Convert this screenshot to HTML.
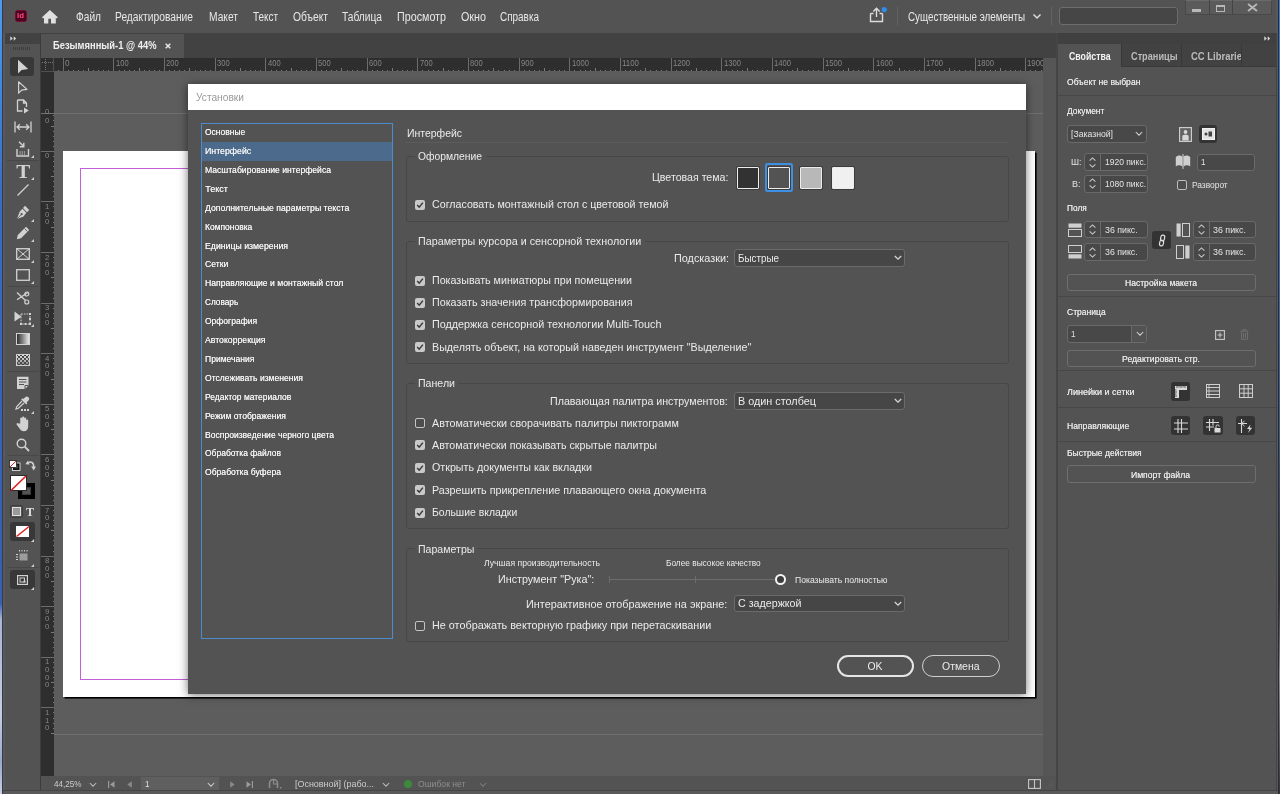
<!DOCTYPE html>
<html><head><meta charset="utf-8"><title>InDesign</title>
<style>
*{box-sizing:border-box;margin:0;padding:0}
html,body{width:1280px;height:794px;overflow:hidden;background:#535353;font-family:"Liberation Sans",sans-serif;color:#e6e6e6;font-size:12px}
.a{position:absolute}
.t{position:absolute;white-space:nowrap}
svg{position:absolute;overflow:visible}
#all{position:absolute;left:0;top:0;width:1280px;height:794px;will-change:transform}

</style></head><body>
<div id="all">
<div class="a" style="left:0px;top:0px;width:2.4px;height:794px;background:linear-gradient(#4d9cf0 0,#3f86dc 12%,#3a6cc4 25%,#3663b8 50%,#3a5fae 76%,#a9b5d2 78%,#c4cde0 90%,#9aa8cc 96%,#c8d0e2 100%);"></div>
<div class="a" style="left:2.4px;top:0px;width:0.9px;height:794px;background:#343c4c;"></div>
<div class="a" style="left:3.2px;top:0px;width:2.1px;height:794px;background:#595959;"></div>
<div class="a" style="left:1276.2px;top:0px;width:1.9px;height:794px;background:#595959;"></div>
<div class="a" style="left:1278px;top:0px;width:0.7px;height:794px;background:#2c2c2c;"></div>
<div class="a" style="left:1278.6px;top:0px;width:1.4px;height:794px;background:linear-gradient(#3b7fd8 0,#3a6fc0 30%,#39598f 55%,#2a2f3a 75%,#8a8f98 85%,#30343c 100%);"></div>
<div class="a" style="left:3.2px;top:0px;width:1273px;height:33px;background:#535353;"></div>
<div class="a" style="left:3.2px;top:791px;width:1275px;height:3px;background:#595959;"></div>
<div class="a" style="left:3.2px;top:790.2px;width:1275px;height:0.9px;background:#454545;"></div>
<div class="a" style="left:1275.5px;top:33px;width:0.8px;height:758px;background:#444;"></div>
<div class="a" style="left:5px;top:33px;width:0.6px;height:758px;background:#454545;"></div>
<div class="a" style="left:5px;top:33px;width:36px;height:11px;background:#424242;"></div>
<div class="a" style="left:5px;top:44px;width:36px;height:746px;background:#535353;"></div>
<div class="a" style="left:40px;top:33px;width:1px;height:757px;background:#3c3c3c;"></div>
<div class="a" style="left:41px;top:33px;width:1016px;height:25px;background:#424242;"></div>
<div class="a" style="left:41px;top:34px;width:143px;height:24px;background:#535353;"></div>
<div class="a" style="left:41px;top:58px;width:1002px;height:13px;background:#2e2e2e;"></div>
<div class="a" style="left:41px;top:71px;width:13px;height:705px;background:#2e2e2e;"></div>
<div class="a" style="left:54px;top:71px;width:989px;height:705px;background:#5d5d5d;"></div>
<div class="a" style="left:41px;top:113px;width:1002px;height:1px;background:#707070;"></div>
<div class="a" style="left:41px;top:71px;width:13px;height:1px;background:#4e4e4e;"></div>
<div class="a" style="left:54px;top:734px;width:989px;height:1px;background:#707070;"></div>
<div class="a" style="left:1043px;top:58px;width:14px;height:718px;background:#565656;"></div>
<div class="a" style="left:41px;top:776px;width:1016px;height:14px;background:#535353;"></div>
<div class="a" style="left:62.8px;top:150.8px;width:972.6px;height:546.5px;background:#fff;box-shadow:1.6px 1.6px 0 #000;"></div>
<div class="a" style="left:80px;top:168px;width:940px;height:512px;border:1px solid #c35fd4;"></div>
<div class="a" style="left:188px;top:84px;width:838px;height:610px;box-shadow:0 1px 9px rgba(0,0,0,.55);"></div>
<div class="a" style="left:188px;top:84px;width:838px;height:26px;background:#fff;"></div>
<div class="a" style="left:188px;top:110px;width:838px;height:584px;background:#535353;"></div>
<div class="a" style="left:1057px;top:33px;width:219px;height:757px;background:#535353;"></div>
<div class="a" style="left:1058px;top:33px;width:218px;height:11px;background:#404040;"></div>
<div class="a" style="left:1058px;top:44px;width:218px;height:22.6px;background:#424242;"></div>
<div class="a" style="left:1056px;top:33px;width:2px;height:757px;background:#454545;"></div>
<div class="a" style="left:14.5px;top:10px;width:12px;height:12px;background:#4b0320;border:1px solid #7a0a35;border-radius:2.5px;"></div>
<svg style="left:42px;top:9.6px" width="15.8" height="13.6" viewBox="0 0 15.8 13.6"><path d="M7.9 0 L0 7.3 L1.1 8.5 L2 7.7 V13.6 H6.3 V8.7 H9 V13.6 H13.8 V7.7 L14.7 8.5 L15.8 7.3 Z" fill="#e0e0e0"/></svg>
<svg style="left:868px;top:6px" width="20" height="18" viewBox="0 0 20 18"><path d="M2.5 7.5 V15.5 H14.5 V7.5 M5.5 7.5 H2.5 M11.5 7.5 H14.5" fill="none" stroke="#dcdcdc" stroke-width="1.4"/><path d="M8.5 11 V2.5 M5.3 5.5 L8.5 2.2 L11.7 5.5" fill="none" stroke="#dcdcdc" stroke-width="1.4"/><circle cx="16.2" cy="3.6" r="2.6" fill="#2f8cf0"/></svg>
<div class="a" style="left:897px;top:7px;width:1px;height:18px;background:#626262;"></div>
<svg style="left:1032px;top:13px" width="10" height="7" viewBox="0 0 10 7"><path d="M1.5 1.5 L5 5 L8.5 1.5" fill="none" stroke="#dcdcdc" stroke-width="1.5"/></svg>
<div class="a" style="left:1051px;top:7px;width:1px;height:18px;background:#626262;"></div>
<div class="a" style="left:1059px;top:7px;width:119px;height:18px;background:#464646;border:1px solid #6c6c6c;border-radius:3px;"></div>
<div class="a" style="left:1185px;top:0px;width:87px;height:15px;background:#5b5b5b;border:1px solid #484848;border-top:1px solid #6a6a6a;"></div>
<div class="a" style="left:1209px;top:0px;width:1px;height:15px;background:#454545;"></div>
<div class="a" style="left:1232px;top:0px;width:1px;height:15px;background:#454545;"></div>
<div class="a" style="left:1192px;top:9px;width:9px;height:3px;background:#b8b8b8;"></div>
<div class="a" style="left:1216px;top:5px;width:9px;height:7px;border:2px solid #b8b8b8;border-width:2px 1.5px 1.5px 1.5px;"></div>
<svg style="left:1247px;top:3px" width="11" height="9" viewBox="0 0 11 9"><path d="M1 1 L10 8 M10 1 L1 8" stroke="#b8b8b8" stroke-width="1.8"/></svg>
<svg style="left:164.5px;top:43px" width="6" height="6" viewBox="0 0 6 6"><path d="M0.7 0.7 L5.3 5.3 M5.3 0.7 L0.7 5.3" stroke="#e8e8e8" stroke-width="1.5"/></svg>
<svg style="left:10px;top:35.5px" width="7" height="5" viewBox="0 0 7 5"><path d="M0.3 0.3 L2.8 2.5 L0.3 4.7 Z M3.7 0.3 L6.2 2.5 L3.7 4.7 Z" fill="#d8d8d8"/></svg>
<div class="a" style="left:13px;top:47px;width:18px;height:3px;background:repeating-linear-gradient(90deg,#3d3d3d 0,#3d3d3d 1px,transparent 1px,transparent 2px);"></div>
<svg style="left:41px;top:58px" width="1002" height="13" viewBox="0 0 1002 13" shape-rendering="crispEdges"><rect x="16.73" y="11.5" width="1" height="1.5" fill="#7a7a7a"/><rect x="21.80" y="0" width="1" height="13" fill="#6c6c6c"/><rect x="26.87" y="11.5" width="1" height="1.5" fill="#7a7a7a"/><rect x="31.93" y="11.5" width="1" height="1.5" fill="#7a7a7a"/><rect x="37.00" y="11.5" width="1" height="1.5" fill="#7a7a7a"/><rect x="42.06" y="11.5" width="1" height="1.5" fill="#7a7a7a"/><rect x="47.13" y="10" width="1" height="3" fill="#7a7a7a"/><rect x="52.20" y="11.5" width="1" height="1.5" fill="#7a7a7a"/><rect x="57.26" y="11.5" width="1" height="1.5" fill="#7a7a7a"/><rect x="62.33" y="11.5" width="1" height="1.5" fill="#7a7a7a"/><rect x="67.39" y="11.5" width="1" height="1.5" fill="#7a7a7a"/><rect x="72.46" y="0" width="1" height="13" fill="#6c6c6c"/><rect x="77.53" y="11.5" width="1" height="1.5" fill="#7a7a7a"/><rect x="82.59" y="11.5" width="1" height="1.5" fill="#7a7a7a"/><rect x="87.66" y="11.5" width="1" height="1.5" fill="#7a7a7a"/><rect x="92.72" y="11.5" width="1" height="1.5" fill="#7a7a7a"/><rect x="97.79" y="10" width="1" height="3" fill="#7a7a7a"/><rect x="102.86" y="11.5" width="1" height="1.5" fill="#7a7a7a"/><rect x="107.92" y="11.5" width="1" height="1.5" fill="#7a7a7a"/><rect x="112.99" y="11.5" width="1" height="1.5" fill="#7a7a7a"/><rect x="118.05" y="11.5" width="1" height="1.5" fill="#7a7a7a"/><rect x="123.12" y="0" width="1" height="13" fill="#6c6c6c"/><rect x="128.19" y="11.5" width="1" height="1.5" fill="#7a7a7a"/><rect x="133.25" y="11.5" width="1" height="1.5" fill="#7a7a7a"/><rect x="138.32" y="11.5" width="1" height="1.5" fill="#7a7a7a"/><rect x="143.38" y="11.5" width="1" height="1.5" fill="#7a7a7a"/><rect x="148.45" y="10" width="1" height="3" fill="#7a7a7a"/><rect x="153.52" y="11.5" width="1" height="1.5" fill="#7a7a7a"/><rect x="158.58" y="11.5" width="1" height="1.5" fill="#7a7a7a"/><rect x="163.65" y="11.5" width="1" height="1.5" fill="#7a7a7a"/><rect x="168.71" y="11.5" width="1" height="1.5" fill="#7a7a7a"/><rect x="173.78" y="0" width="1" height="13" fill="#6c6c6c"/><rect x="178.85" y="11.5" width="1" height="1.5" fill="#7a7a7a"/><rect x="183.91" y="11.5" width="1" height="1.5" fill="#7a7a7a"/><rect x="188.98" y="11.5" width="1" height="1.5" fill="#7a7a7a"/><rect x="194.04" y="11.5" width="1" height="1.5" fill="#7a7a7a"/><rect x="199.11" y="10" width="1" height="3" fill="#7a7a7a"/><rect x="204.18" y="11.5" width="1" height="1.5" fill="#7a7a7a"/><rect x="209.24" y="11.5" width="1" height="1.5" fill="#7a7a7a"/><rect x="214.31" y="11.5" width="1" height="1.5" fill="#7a7a7a"/><rect x="219.37" y="11.5" width="1" height="1.5" fill="#7a7a7a"/><rect x="224.44" y="0" width="1" height="13" fill="#6c6c6c"/><rect x="229.51" y="11.5" width="1" height="1.5" fill="#7a7a7a"/><rect x="234.57" y="11.5" width="1" height="1.5" fill="#7a7a7a"/><rect x="239.64" y="11.5" width="1" height="1.5" fill="#7a7a7a"/><rect x="244.70" y="11.5" width="1" height="1.5" fill="#7a7a7a"/><rect x="249.77" y="10" width="1" height="3" fill="#7a7a7a"/><rect x="254.84" y="11.5" width="1" height="1.5" fill="#7a7a7a"/><rect x="259.90" y="11.5" width="1" height="1.5" fill="#7a7a7a"/><rect x="264.97" y="11.5" width="1" height="1.5" fill="#7a7a7a"/><rect x="270.03" y="11.5" width="1" height="1.5" fill="#7a7a7a"/><rect x="275.10" y="0" width="1" height="13" fill="#6c6c6c"/><rect x="280.17" y="11.5" width="1" height="1.5" fill="#7a7a7a"/><rect x="285.23" y="11.5" width="1" height="1.5" fill="#7a7a7a"/><rect x="290.30" y="11.5" width="1" height="1.5" fill="#7a7a7a"/><rect x="295.36" y="11.5" width="1" height="1.5" fill="#7a7a7a"/><rect x="300.43" y="10" width="1" height="3" fill="#7a7a7a"/><rect x="305.50" y="11.5" width="1" height="1.5" fill="#7a7a7a"/><rect x="310.56" y="11.5" width="1" height="1.5" fill="#7a7a7a"/><rect x="315.63" y="11.5" width="1" height="1.5" fill="#7a7a7a"/><rect x="320.69" y="11.5" width="1" height="1.5" fill="#7a7a7a"/><rect x="325.76" y="0" width="1" height="13" fill="#6c6c6c"/><rect x="330.83" y="11.5" width="1" height="1.5" fill="#7a7a7a"/><rect x="335.89" y="11.5" width="1" height="1.5" fill="#7a7a7a"/><rect x="340.96" y="11.5" width="1" height="1.5" fill="#7a7a7a"/><rect x="346.02" y="11.5" width="1" height="1.5" fill="#7a7a7a"/><rect x="351.09" y="10" width="1" height="3" fill="#7a7a7a"/><rect x="356.16" y="11.5" width="1" height="1.5" fill="#7a7a7a"/><rect x="361.22" y="11.5" width="1" height="1.5" fill="#7a7a7a"/><rect x="366.29" y="11.5" width="1" height="1.5" fill="#7a7a7a"/><rect x="371.35" y="11.5" width="1" height="1.5" fill="#7a7a7a"/><rect x="376.42" y="0" width="1" height="13" fill="#6c6c6c"/><rect x="381.49" y="11.5" width="1" height="1.5" fill="#7a7a7a"/><rect x="386.55" y="11.5" width="1" height="1.5" fill="#7a7a7a"/><rect x="391.62" y="11.5" width="1" height="1.5" fill="#7a7a7a"/><rect x="396.68" y="11.5" width="1" height="1.5" fill="#7a7a7a"/><rect x="401.75" y="10" width="1" height="3" fill="#7a7a7a"/><rect x="406.82" y="11.5" width="1" height="1.5" fill="#7a7a7a"/><rect x="411.88" y="11.5" width="1" height="1.5" fill="#7a7a7a"/><rect x="416.95" y="11.5" width="1" height="1.5" fill="#7a7a7a"/><rect x="422.01" y="11.5" width="1" height="1.5" fill="#7a7a7a"/><rect x="427.08" y="0" width="1" height="13" fill="#6c6c6c"/><rect x="432.15" y="11.5" width="1" height="1.5" fill="#7a7a7a"/><rect x="437.21" y="11.5" width="1" height="1.5" fill="#7a7a7a"/><rect x="442.28" y="11.5" width="1" height="1.5" fill="#7a7a7a"/><rect x="447.34" y="11.5" width="1" height="1.5" fill="#7a7a7a"/><rect x="452.41" y="10" width="1" height="3" fill="#7a7a7a"/><rect x="457.48" y="11.5" width="1" height="1.5" fill="#7a7a7a"/><rect x="462.54" y="11.5" width="1" height="1.5" fill="#7a7a7a"/><rect x="467.61" y="11.5" width="1" height="1.5" fill="#7a7a7a"/><rect x="472.67" y="11.5" width="1" height="1.5" fill="#7a7a7a"/><rect x="477.74" y="0" width="1" height="13" fill="#6c6c6c"/><rect x="482.81" y="11.5" width="1" height="1.5" fill="#7a7a7a"/><rect x="487.87" y="11.5" width="1" height="1.5" fill="#7a7a7a"/><rect x="492.94" y="11.5" width="1" height="1.5" fill="#7a7a7a"/><rect x="498.00" y="11.5" width="1" height="1.5" fill="#7a7a7a"/><rect x="503.07" y="10" width="1" height="3" fill="#7a7a7a"/><rect x="508.14" y="11.5" width="1" height="1.5" fill="#7a7a7a"/><rect x="513.20" y="11.5" width="1" height="1.5" fill="#7a7a7a"/><rect x="518.27" y="11.5" width="1" height="1.5" fill="#7a7a7a"/><rect x="523.33" y="11.5" width="1" height="1.5" fill="#7a7a7a"/><rect x="528.40" y="0" width="1" height="13" fill="#6c6c6c"/><rect x="533.47" y="11.5" width="1" height="1.5" fill="#7a7a7a"/><rect x="538.53" y="11.5" width="1" height="1.5" fill="#7a7a7a"/><rect x="543.60" y="11.5" width="1" height="1.5" fill="#7a7a7a"/><rect x="548.66" y="11.5" width="1" height="1.5" fill="#7a7a7a"/><rect x="553.73" y="10" width="1" height="3" fill="#7a7a7a"/><rect x="558.80" y="11.5" width="1" height="1.5" fill="#7a7a7a"/><rect x="563.86" y="11.5" width="1" height="1.5" fill="#7a7a7a"/><rect x="568.93" y="11.5" width="1" height="1.5" fill="#7a7a7a"/><rect x="573.99" y="11.5" width="1" height="1.5" fill="#7a7a7a"/><rect x="579.06" y="0" width="1" height="13" fill="#6c6c6c"/><rect x="584.13" y="11.5" width="1" height="1.5" fill="#7a7a7a"/><rect x="589.19" y="11.5" width="1" height="1.5" fill="#7a7a7a"/><rect x="594.26" y="11.5" width="1" height="1.5" fill="#7a7a7a"/><rect x="599.32" y="11.5" width="1" height="1.5" fill="#7a7a7a"/><rect x="604.39" y="10" width="1" height="3" fill="#7a7a7a"/><rect x="609.46" y="11.5" width="1" height="1.5" fill="#7a7a7a"/><rect x="614.52" y="11.5" width="1" height="1.5" fill="#7a7a7a"/><rect x="619.59" y="11.5" width="1" height="1.5" fill="#7a7a7a"/><rect x="624.65" y="11.5" width="1" height="1.5" fill="#7a7a7a"/><rect x="629.72" y="0" width="1" height="13" fill="#6c6c6c"/><rect x="634.79" y="11.5" width="1" height="1.5" fill="#7a7a7a"/><rect x="639.85" y="11.5" width="1" height="1.5" fill="#7a7a7a"/><rect x="644.92" y="11.5" width="1" height="1.5" fill="#7a7a7a"/><rect x="649.98" y="11.5" width="1" height="1.5" fill="#7a7a7a"/><rect x="655.05" y="10" width="1" height="3" fill="#7a7a7a"/><rect x="660.12" y="11.5" width="1" height="1.5" fill="#7a7a7a"/><rect x="665.18" y="11.5" width="1" height="1.5" fill="#7a7a7a"/><rect x="670.25" y="11.5" width="1" height="1.5" fill="#7a7a7a"/><rect x="675.31" y="11.5" width="1" height="1.5" fill="#7a7a7a"/><rect x="680.38" y="0" width="1" height="13" fill="#6c6c6c"/><rect x="685.45" y="11.5" width="1" height="1.5" fill="#7a7a7a"/><rect x="690.51" y="11.5" width="1" height="1.5" fill="#7a7a7a"/><rect x="695.58" y="11.5" width="1" height="1.5" fill="#7a7a7a"/><rect x="700.64" y="11.5" width="1" height="1.5" fill="#7a7a7a"/><rect x="705.71" y="10" width="1" height="3" fill="#7a7a7a"/><rect x="710.78" y="11.5" width="1" height="1.5" fill="#7a7a7a"/><rect x="715.84" y="11.5" width="1" height="1.5" fill="#7a7a7a"/><rect x="720.91" y="11.5" width="1" height="1.5" fill="#7a7a7a"/><rect x="725.97" y="11.5" width="1" height="1.5" fill="#7a7a7a"/><rect x="731.04" y="0" width="1" height="13" fill="#6c6c6c"/><rect x="736.11" y="11.5" width="1" height="1.5" fill="#7a7a7a"/><rect x="741.17" y="11.5" width="1" height="1.5" fill="#7a7a7a"/><rect x="746.24" y="11.5" width="1" height="1.5" fill="#7a7a7a"/><rect x="751.30" y="11.5" width="1" height="1.5" fill="#7a7a7a"/><rect x="756.37" y="10" width="1" height="3" fill="#7a7a7a"/><rect x="761.44" y="11.5" width="1" height="1.5" fill="#7a7a7a"/><rect x="766.50" y="11.5" width="1" height="1.5" fill="#7a7a7a"/><rect x="771.57" y="11.5" width="1" height="1.5" fill="#7a7a7a"/><rect x="776.63" y="11.5" width="1" height="1.5" fill="#7a7a7a"/><rect x="781.70" y="0" width="1" height="13" fill="#6c6c6c"/><rect x="786.77" y="11.5" width="1" height="1.5" fill="#7a7a7a"/><rect x="791.83" y="11.5" width="1" height="1.5" fill="#7a7a7a"/><rect x="796.90" y="11.5" width="1" height="1.5" fill="#7a7a7a"/><rect x="801.96" y="11.5" width="1" height="1.5" fill="#7a7a7a"/><rect x="807.03" y="10" width="1" height="3" fill="#7a7a7a"/><rect x="812.10" y="11.5" width="1" height="1.5" fill="#7a7a7a"/><rect x="817.16" y="11.5" width="1" height="1.5" fill="#7a7a7a"/><rect x="822.23" y="11.5" width="1" height="1.5" fill="#7a7a7a"/><rect x="827.29" y="11.5" width="1" height="1.5" fill="#7a7a7a"/><rect x="832.36" y="0" width="1" height="13" fill="#6c6c6c"/><rect x="837.43" y="11.5" width="1" height="1.5" fill="#7a7a7a"/><rect x="842.49" y="11.5" width="1" height="1.5" fill="#7a7a7a"/><rect x="847.56" y="11.5" width="1" height="1.5" fill="#7a7a7a"/><rect x="852.62" y="11.5" width="1" height="1.5" fill="#7a7a7a"/><rect x="857.69" y="10" width="1" height="3" fill="#7a7a7a"/><rect x="862.76" y="11.5" width="1" height="1.5" fill="#7a7a7a"/><rect x="867.82" y="11.5" width="1" height="1.5" fill="#7a7a7a"/><rect x="872.89" y="11.5" width="1" height="1.5" fill="#7a7a7a"/><rect x="877.95" y="11.5" width="1" height="1.5" fill="#7a7a7a"/><rect x="883.02" y="0" width="1" height="13" fill="#6c6c6c"/><rect x="888.09" y="11.5" width="1" height="1.5" fill="#7a7a7a"/><rect x="893.15" y="11.5" width="1" height="1.5" fill="#7a7a7a"/><rect x="898.22" y="11.5" width="1" height="1.5" fill="#7a7a7a"/><rect x="903.28" y="11.5" width="1" height="1.5" fill="#7a7a7a"/><rect x="908.35" y="10" width="1" height="3" fill="#7a7a7a"/><rect x="913.42" y="11.5" width="1" height="1.5" fill="#7a7a7a"/><rect x="918.48" y="11.5" width="1" height="1.5" fill="#7a7a7a"/><rect x="923.55" y="11.5" width="1" height="1.5" fill="#7a7a7a"/><rect x="928.61" y="11.5" width="1" height="1.5" fill="#7a7a7a"/><rect x="933.68" y="0" width="1" height="13" fill="#6c6c6c"/><rect x="938.75" y="11.5" width="1" height="1.5" fill="#7a7a7a"/><rect x="943.81" y="11.5" width="1" height="1.5" fill="#7a7a7a"/><rect x="948.88" y="11.5" width="1" height="1.5" fill="#7a7a7a"/><rect x="953.94" y="11.5" width="1" height="1.5" fill="#7a7a7a"/><rect x="959.01" y="10" width="1" height="3" fill="#7a7a7a"/><rect x="964.08" y="11.5" width="1" height="1.5" fill="#7a7a7a"/><rect x="969.14" y="11.5" width="1" height="1.5" fill="#7a7a7a"/><rect x="974.21" y="11.5" width="1" height="1.5" fill="#7a7a7a"/><rect x="979.27" y="11.5" width="1" height="1.5" fill="#7a7a7a"/><rect x="984.34" y="0" width="1" height="13" fill="#6c6c6c"/><rect x="989.41" y="11.5" width="1" height="1.5" fill="#7a7a7a"/><rect x="994.47" y="11.5" width="1" height="1.5" fill="#7a7a7a"/><rect x="999.54" y="11.5" width="1" height="1.5" fill="#7a7a7a"/></svg>
<div class="a" style="left:1027.3px;top:58px;width:15.7px;height:12px;overflow:hidden"><div class="t" style="left:0;top:1.1px;font-size:8.5px;line-height:8.5px;color:#868686;transform:scaleX(.92);transform-origin:0 0">1900</div></div>
<svg style="left:41px;top:58px" width="13" height="13" viewBox="0 0 13 13"><path d="M4.5 1 V12 M1 4.5 H12" stroke="#777" stroke-width="1" stroke-dasharray="1 1"/></svg>
<div class="a" style="left:53px;top:58px;width:1px;height:13px;background:#505050;"></div>
<svg style="left:41px;top:71px" width="13" height="705" viewBox="0 0 13 705" shape-rendering="crispEdges"><rect x="11.5" y="44.38" width="1.5" height="1" fill="#7a7a7a"/><rect x="11.5" y="49.44" width="1.5" height="1" fill="#7a7a7a"/><rect x="10" y="54.50" width="3" height="1" fill="#7a7a7a"/><rect x="11.5" y="59.56" width="1.5" height="1" fill="#7a7a7a"/><rect x="11.5" y="64.62" width="1.5" height="1" fill="#7a7a7a"/><rect x="11.5" y="69.68" width="1.5" height="1" fill="#7a7a7a"/><rect x="11.5" y="74.74" width="1.5" height="1" fill="#7a7a7a"/><rect x="0" y="79.80" width="13" height="1" fill="#6c6c6c"/><rect x="11.5" y="84.86" width="1.5" height="1" fill="#7a7a7a"/><rect x="11.5" y="89.92" width="1.5" height="1" fill="#7a7a7a"/><rect x="11.5" y="94.98" width="1.5" height="1" fill="#7a7a7a"/><rect x="11.5" y="100.04" width="1.5" height="1" fill="#7a7a7a"/><rect x="10" y="105.10" width="3" height="1" fill="#7a7a7a"/><rect x="11.5" y="110.16" width="1.5" height="1" fill="#7a7a7a"/><rect x="11.5" y="115.22" width="1.5" height="1" fill="#7a7a7a"/><rect x="11.5" y="120.28" width="1.5" height="1" fill="#7a7a7a"/><rect x="11.5" y="125.34" width="1.5" height="1" fill="#7a7a7a"/><rect x="0" y="130.40" width="13" height="1" fill="#6c6c6c"/><rect x="11.5" y="135.46" width="1.5" height="1" fill="#7a7a7a"/><rect x="11.5" y="140.52" width="1.5" height="1" fill="#7a7a7a"/><rect x="11.5" y="145.58" width="1.5" height="1" fill="#7a7a7a"/><rect x="11.5" y="150.64" width="1.5" height="1" fill="#7a7a7a"/><rect x="10" y="155.70" width="3" height="1" fill="#7a7a7a"/><rect x="11.5" y="160.76" width="1.5" height="1" fill="#7a7a7a"/><rect x="11.5" y="165.82" width="1.5" height="1" fill="#7a7a7a"/><rect x="11.5" y="170.88" width="1.5" height="1" fill="#7a7a7a"/><rect x="11.5" y="175.94" width="1.5" height="1" fill="#7a7a7a"/><rect x="0" y="181.00" width="13" height="1" fill="#6c6c6c"/><rect x="11.5" y="186.06" width="1.5" height="1" fill="#7a7a7a"/><rect x="11.5" y="191.12" width="1.5" height="1" fill="#7a7a7a"/><rect x="11.5" y="196.18" width="1.5" height="1" fill="#7a7a7a"/><rect x="11.5" y="201.24" width="1.5" height="1" fill="#7a7a7a"/><rect x="10" y="206.30" width="3" height="1" fill="#7a7a7a"/><rect x="11.5" y="211.36" width="1.5" height="1" fill="#7a7a7a"/><rect x="11.5" y="216.42" width="1.5" height="1" fill="#7a7a7a"/><rect x="11.5" y="221.48" width="1.5" height="1" fill="#7a7a7a"/><rect x="11.5" y="226.54" width="1.5" height="1" fill="#7a7a7a"/><rect x="0" y="231.60" width="13" height="1" fill="#6c6c6c"/><rect x="11.5" y="236.66" width="1.5" height="1" fill="#7a7a7a"/><rect x="11.5" y="241.72" width="1.5" height="1" fill="#7a7a7a"/><rect x="11.5" y="246.78" width="1.5" height="1" fill="#7a7a7a"/><rect x="11.5" y="251.84" width="1.5" height="1" fill="#7a7a7a"/><rect x="10" y="256.90" width="3" height="1" fill="#7a7a7a"/><rect x="11.5" y="261.96" width="1.5" height="1" fill="#7a7a7a"/><rect x="11.5" y="267.02" width="1.5" height="1" fill="#7a7a7a"/><rect x="11.5" y="272.08" width="1.5" height="1" fill="#7a7a7a"/><rect x="11.5" y="277.14" width="1.5" height="1" fill="#7a7a7a"/><rect x="0" y="282.20" width="13" height="1" fill="#6c6c6c"/><rect x="11.5" y="287.26" width="1.5" height="1" fill="#7a7a7a"/><rect x="11.5" y="292.32" width="1.5" height="1" fill="#7a7a7a"/><rect x="11.5" y="297.38" width="1.5" height="1" fill="#7a7a7a"/><rect x="11.5" y="302.44" width="1.5" height="1" fill="#7a7a7a"/><rect x="10" y="307.50" width="3" height="1" fill="#7a7a7a"/><rect x="11.5" y="312.56" width="1.5" height="1" fill="#7a7a7a"/><rect x="11.5" y="317.62" width="1.5" height="1" fill="#7a7a7a"/><rect x="11.5" y="322.68" width="1.5" height="1" fill="#7a7a7a"/><rect x="11.5" y="327.74" width="1.5" height="1" fill="#7a7a7a"/><rect x="0" y="332.80" width="13" height="1" fill="#6c6c6c"/><rect x="11.5" y="337.86" width="1.5" height="1" fill="#7a7a7a"/><rect x="11.5" y="342.92" width="1.5" height="1" fill="#7a7a7a"/><rect x="11.5" y="347.98" width="1.5" height="1" fill="#7a7a7a"/><rect x="11.5" y="353.04" width="1.5" height="1" fill="#7a7a7a"/><rect x="10" y="358.10" width="3" height="1" fill="#7a7a7a"/><rect x="11.5" y="363.16" width="1.5" height="1" fill="#7a7a7a"/><rect x="11.5" y="368.22" width="1.5" height="1" fill="#7a7a7a"/><rect x="11.5" y="373.28" width="1.5" height="1" fill="#7a7a7a"/><rect x="11.5" y="378.34" width="1.5" height="1" fill="#7a7a7a"/><rect x="0" y="383.40" width="13" height="1" fill="#6c6c6c"/><rect x="11.5" y="388.46" width="1.5" height="1" fill="#7a7a7a"/><rect x="11.5" y="393.52" width="1.5" height="1" fill="#7a7a7a"/><rect x="11.5" y="398.58" width="1.5" height="1" fill="#7a7a7a"/><rect x="11.5" y="403.64" width="1.5" height="1" fill="#7a7a7a"/><rect x="10" y="408.70" width="3" height="1" fill="#7a7a7a"/><rect x="11.5" y="413.76" width="1.5" height="1" fill="#7a7a7a"/><rect x="11.5" y="418.82" width="1.5" height="1" fill="#7a7a7a"/><rect x="11.5" y="423.88" width="1.5" height="1" fill="#7a7a7a"/><rect x="11.5" y="428.94" width="1.5" height="1" fill="#7a7a7a"/><rect x="0" y="434.00" width="13" height="1" fill="#6c6c6c"/><rect x="11.5" y="439.06" width="1.5" height="1" fill="#7a7a7a"/><rect x="11.5" y="444.12" width="1.5" height="1" fill="#7a7a7a"/><rect x="11.5" y="449.18" width="1.5" height="1" fill="#7a7a7a"/><rect x="11.5" y="454.24" width="1.5" height="1" fill="#7a7a7a"/><rect x="10" y="459.30" width="3" height="1" fill="#7a7a7a"/><rect x="11.5" y="464.36" width="1.5" height="1" fill="#7a7a7a"/><rect x="11.5" y="469.42" width="1.5" height="1" fill="#7a7a7a"/><rect x="11.5" y="474.48" width="1.5" height="1" fill="#7a7a7a"/><rect x="11.5" y="479.54" width="1.5" height="1" fill="#7a7a7a"/><rect x="0" y="484.60" width="13" height="1" fill="#6c6c6c"/><rect x="11.5" y="489.66" width="1.5" height="1" fill="#7a7a7a"/><rect x="11.5" y="494.72" width="1.5" height="1" fill="#7a7a7a"/><rect x="11.5" y="499.78" width="1.5" height="1" fill="#7a7a7a"/><rect x="11.5" y="504.84" width="1.5" height="1" fill="#7a7a7a"/><rect x="10" y="509.90" width="3" height="1" fill="#7a7a7a"/><rect x="11.5" y="514.96" width="1.5" height="1" fill="#7a7a7a"/><rect x="11.5" y="520.02" width="1.5" height="1" fill="#7a7a7a"/><rect x="11.5" y="525.08" width="1.5" height="1" fill="#7a7a7a"/><rect x="11.5" y="530.14" width="1.5" height="1" fill="#7a7a7a"/><rect x="0" y="535.20" width="13" height="1" fill="#6c6c6c"/><rect x="11.5" y="540.26" width="1.5" height="1" fill="#7a7a7a"/><rect x="11.5" y="545.32" width="1.5" height="1" fill="#7a7a7a"/><rect x="11.5" y="550.38" width="1.5" height="1" fill="#7a7a7a"/><rect x="11.5" y="555.44" width="1.5" height="1" fill="#7a7a7a"/><rect x="10" y="560.50" width="3" height="1" fill="#7a7a7a"/><rect x="11.5" y="565.56" width="1.5" height="1" fill="#7a7a7a"/><rect x="11.5" y="570.62" width="1.5" height="1" fill="#7a7a7a"/><rect x="11.5" y="575.68" width="1.5" height="1" fill="#7a7a7a"/><rect x="11.5" y="580.74" width="1.5" height="1" fill="#7a7a7a"/><rect x="0" y="585.80" width="13" height="1" fill="#6c6c6c"/><rect x="11.5" y="590.86" width="1.5" height="1" fill="#7a7a7a"/><rect x="11.5" y="595.92" width="1.5" height="1" fill="#7a7a7a"/><rect x="11.5" y="600.98" width="1.5" height="1" fill="#7a7a7a"/><rect x="11.5" y="606.04" width="1.5" height="1" fill="#7a7a7a"/><rect x="10" y="611.10" width="3" height="1" fill="#7a7a7a"/><rect x="11.5" y="616.16" width="1.5" height="1" fill="#7a7a7a"/><rect x="11.5" y="621.22" width="1.5" height="1" fill="#7a7a7a"/><rect x="11.5" y="626.28" width="1.5" height="1" fill="#7a7a7a"/><rect x="11.5" y="631.34" width="1.5" height="1" fill="#7a7a7a"/><rect x="0" y="636.40" width="13" height="1" fill="#6c6c6c"/><rect x="11.5" y="641.46" width="1.5" height="1" fill="#7a7a7a"/><rect x="11.5" y="646.52" width="1.5" height="1" fill="#7a7a7a"/><rect x="11.5" y="651.58" width="1.5" height="1" fill="#7a7a7a"/><rect x="11.5" y="656.64" width="1.5" height="1" fill="#7a7a7a"/><rect x="10" y="661.70" width="3" height="1" fill="#7a7a7a"/></svg>
<div class="a" style="left:10px;top:57px;width:24px;height:19px;background:#383838;border-radius:3px;"></div>
<svg style="left:17px;top:59px" width="12" height="15" viewBox="0 0 12 15"><path d="M1 0.8 V14.5 L4.6 10.9 L11.2 10 Z" fill="#d2d2d2"/></svg>
<svg style="left:17px;top:80px" width="12" height="15" viewBox="0 0 12 15"><path d="M1.6 1.8 V13.2 L4.6 10.2 L10 9.4 Z" fill="none" stroke="#d2d2d2" stroke-width="1.2" stroke-linejoin="round"/></svg>
<svg style="left:16px;top:99px" width="14" height="15" viewBox="0 0 14 15"><path d="M1.5 1 H7.5 L10.5 4 V8 M7.5 1 V4 H10.5 M1.5 1 V12 H6.5" fill="none" stroke="#d2d2d2" stroke-width="1.3"/><path d="M8 8.5 V14.5 L12.8 11.5 Z" fill="#d2d2d2"/></svg>
<svg style="left:14px;top:121px" width="18" height="12" viewBox="0 0 18 12"><path d="M1 0.5 V11.5 M17 0.5 V11.5 M3 6 H15 M5.8 3.2 L3 6 L5.8 8.8 M12.2 3.2 L15 6 L12.2 8.8" fill="none" stroke="#d2d2d2" stroke-width="1.3"/></svg>
<svg style="left:16px;top:141px" width="14" height="16" viewBox="0 0 14 16"><path d="M1 8 V15 H12.5 V8" fill="none" stroke="#d2d2d2" stroke-width="1.4"/><path d="M3.5 11 H10 M3.5 13 H10" stroke="#d2d2d2" stroke-width="1" stroke-dasharray="1.2 1"/><path d="M3 0.8 L7.5 5.3 M7.8 1.8 V5.8 H3.8" fill="none" stroke="#d2d2d2" stroke-width="1.4"/></svg>
<svg style="left:31px;top:155px" width="3" height="3" viewBox="0 0 3 3"><path d="M3 0 V3 H0 Z" fill="#cfcfcf"/></svg>
<svg style="left:31px;top:177px" width="3" height="3" viewBox="0 0 3 3"><path d="M3 0 V3 H0 Z" fill="#cfcfcf"/></svg>
<div class="a" style="left:7px;top:160px;width:32px;height:1px;background:#484848;"></div>
<svg style="left:17px;top:184px" width="12" height="12" viewBox="0 0 12 12"><path d="M0.5 11.5 L11.5 0.5" stroke="#d2d2d2" stroke-width="1.3"/></svg>
<svg style="left:16px;top:205px" width="14" height="15" viewBox="0 0 14 15"><path d="M9 0.8 L13.2 5 L11 7.2 L7 3 Z" fill="#d2d2d2"/><path d="M6.3 3.8 L10.3 7.8 L7.5 11.5 L1 14 L3.5 7 Z" fill="#d2d2d2"/><circle cx="5.6" cy="9.2" r="1.1" fill="#535353"/><path d="M1 14 L5 9.8" stroke="#535353" stroke-width=".8"/></svg>
<svg style="left:31px;top:219px" width="3" height="3" viewBox="0 0 3 3"><path d="M3 0 V3 H0 Z" fill="#cfcfcf"/></svg>
<svg style="left:16px;top:226px" width="14" height="14" viewBox="0 0 14 14"><path d="M10 0.8 L13.2 4 L5 12.2 L0.8 13.2 L1.8 9 Z" fill="#d2d2d2"/><path d="M8.6 2.6 L11.4 5.4" stroke="#535353" stroke-width=".9"/></svg>
<svg style="left:31px;top:239px" width="3" height="3" viewBox="0 0 3 3"><path d="M3 0 V3 H0 Z" fill="#cfcfcf"/></svg>
<svg style="left:16px;top:248px" width="14" height="12" viewBox="0 0 14 12"><rect x=".7" y=".7" width="12.6" height="10.6" fill="none" stroke="#d2d2d2" stroke-width="1.3"/><path d="M.7 .7 L13.3 11.3 M13.3 .7 L.7 11.3" stroke="#d2d2d2" stroke-width="1"/></svg>
<svg style="left:31px;top:260px" width="3" height="3" viewBox="0 0 3 3"><path d="M3 0 V3 H0 Z" fill="#cfcfcf"/></svg>
<svg style="left:16px;top:269px" width="14" height="12" viewBox="0 0 14 12"><rect x=".7" y=".7" width="12.6" height="10.6" fill="none" stroke="#d2d2d2" stroke-width="1.3"/></svg>
<svg style="left:31px;top:281px" width="3" height="3" viewBox="0 0 3 3"><path d="M3 0 V3 H0 Z" fill="#cfcfcf"/></svg>
<div class="a" style="left:7px;top:286px;width:32px;height:1px;background:#484848;"></div>
<svg style="left:16px;top:291px" width="14" height="14" viewBox="0 0 14 14"><path d="M1 1.5 L9.5 9.5 M1 8.8 L12.5 1" stroke="#d2d2d2" stroke-width="1.3" fill="none"/><circle cx="10.8" cy="3" r="2" fill="none" stroke="#d2d2d2" stroke-width="1.2"/><circle cx="10.8" cy="11" r="2" fill="none" stroke="#d2d2d2" stroke-width="1.2"/></svg>
<svg style="left:14px;top:311px" width="18" height="16" viewBox="0 0 18 16"><path d="M0.5 0.5 V10.5 L7.5 5.8 Z" fill="#d2d2d2"/><rect x="7" y="3" width="9" height="10" fill="none" stroke="#d2d2d2" stroke-width="1" stroke-dasharray="1.6 1.2"/><rect x="6" y="12" width="2" height="2" fill="#d2d2d2"/><rect x="15" y="12" width="2" height="2" fill="#d2d2d2"/><rect x="15" y="2" width="2" height="2" fill="#d2d2d2"/><rect x="10.5" y="12" width="2" height="2" fill="#d2d2d2"/><rect x="15" y="7" width="2" height="2" fill="#d2d2d2"/></svg>
<svg style="left:31px;top:324px" width="3" height="3" viewBox="0 0 3 3"><path d="M3 0 V3 H0 Z" fill="#cfcfcf"/></svg>
<div class="a" style="left:16px;top:333px;width:14px;height:12px;background:linear-gradient(90deg,#2e2e2e,#e6e6e6);border:1px solid #d2d2d2;"></div>
<svg style="left:16px;top:354px" width="14" height="12" viewBox="0 0 14 12"><defs><pattern id="ck" width="4" height="4" patternUnits="userSpaceOnUse"><rect width="4" height="4" fill="#d8d8d8"/><rect width="2" height="2" fill="#2c2c2c"/><rect x="2" y="2" width="2" height="2" fill="#2c2c2c"/></pattern><linearGradient id="gf" x1="0" y1="0" x2="0" y2="1"><stop offset="0" stop-color="#d8d8d8" stop-opacity=".0"/><stop offset="1" stop-color="#3a3a3a" stop-opacity=".75"/></linearGradient></defs><rect width="14" height="12" fill="url(#ck)"/><rect width="14" height="12" fill="url(#gf)"/><rect x=".5" y=".5" width="13" height="11" fill="none" stroke="#cfcfcf"/></svg>
<div class="a" style="left:7px;top:371px;width:32px;height:1px;background:#484848;"></div>
<svg style="left:16px;top:376px" width="14" height="14" viewBox="0 0 14 14"><path d="M1 0.8 H12.5 V9.5 L9 13 H1 Z" fill="#d2d2d2"/><path d="M3 3.5 H10.5 M3 6 H10.5 M3 8.5 H8" stroke="#535353" stroke-width="1.1"/><path d="M9 13 V9.5 H12.5" fill="none" stroke="#535353" stroke-width="1"/></svg>
<svg style="left:15px;top:396px" width="18" height="16" viewBox="0 0 18 16"><path d="M9.2 1.2 a2.3 2.3 0 0 1 3.3 3.3 L10.6 6.4 L11.4 7.2 L10.2 8.4 L5.2 3.4 L6.4 2.2 L7.2 3 Z" fill="#d2d2d2" transform="translate(1,0)"/><path d="M7 5 L1.8 10.5 L1 13 L3.4 12.2 L9 7" fill="none" stroke="#d2d2d2" stroke-width="1.2"/><path d="M6 14 H15" stroke="#d2d2d2" stroke-width="2" stroke-dasharray="2 1"/></svg>
<svg style="left:31px;top:411px" width="3" height="3" viewBox="0 0 3 3"><path d="M3 0 V3 H0 Z" fill="#cfcfcf"/></svg>
<svg style="left:15px;top:416px" width="16" height="16" viewBox="0 0 16 16"><path d="M5.2 7.5 V2.6 a1 1 0 0 1 2 0 V6.5 V1.6 a1 1 0 0 1 2 0 V6.5 V2.4 a1 1 0 0 1 2 0 V7 V4.4 a1 1 0 0 1 2 0 V10.5 C13.2 13.5 11.5 15.2 8.8 15.2 C6.5 15.2 5.3 14 4.2 12 L1.6 8.6 a1.1 1.1 0 0 1 1.8 -1.2 Z" fill="#d2d2d2"/></svg>
<svg style="left:16px;top:438px" width="14" height="14" viewBox="0 0 14 14"><circle cx="5.5" cy="5.5" r="4.3" fill="none" stroke="#d2d2d2" stroke-width="1.4"/><path d="M8.7 8.7 L13 13" stroke="#d2d2d2" stroke-width="1.8"/></svg>
<div class="a" style="left:7px;top:455px;width:32px;height:1px;background:#484848;"></div>
<svg style="left:9px;top:460px" width="12" height="11" viewBox="0 0 12 11"><rect x="3.5" y="3" width="7.5" height="7.5" fill="#111" stroke="#ddd" stroke-width=".9"/><rect x="5.8" y="5.3" width="3" height="3" fill="#535353"/><rect x=".5" y=".5" width="7" height="7" fill="#fff" stroke="#222" stroke-width=".8"/><path d="M1 7 L7 1" stroke="#e02020" stroke-width="1"/></svg>
<svg style="left:25px;top:460px" width="11" height="11" viewBox="0 0 11 11"><path d="M2.5 4 C2.5 2 5 1.5 7 2.5 C8.5 3.3 8.7 5 8.7 7" fill="none" stroke="#d2d2d2" stroke-width="1.5"/><path d="M0.3 4.2 L2.8 0.8 L4.8 4.6 Z" fill="#d2d2d2"/><path d="M6.2 6.6 L11 6.6 L8.7 10.4 Z" fill="#d2d2d2"/></svg>
<div class="a" style="left:18px;top:482.5px;width:16.5px;height:16px;border:4px solid #000;"></div>
<div class="a" style="left:22px;top:486.5px;width:8.5px;height:8px;border:1px solid #3a3a3a;"></div>
<div class="a" style="left:10px;top:474.5px;width:17px;height:16.5px;background:#fff;border:1px solid #2a2a2a;"></div>
<svg style="left:10px;top:474.5px" width="17" height="16.5" viewBox="0 0 17 16.5"><path d="M1 15.5 L16 1" stroke="#e01b1b" stroke-width="1.6"/></svg>
<div class="a" style="left:12px;top:507px;width:9px;height:9px;background:#9a9a9a;border:1.5px solid #e0e0e0;"></div>
<div class="a" style="left:10px;top:505px;width:13px;height:13px;border:1px solid #3d3d3d;border-radius:2px;"></div>
<div class="a" style="left:10px;top:522px;width:24.5px;height:19px;background:#383838;border-radius:3px;"></div>
<div class="a" style="left:15.5px;top:526px;width:13.5px;height:11px;background:#fff;"></div>
<svg style="left:15.5px;top:526px" width="13.5" height="11" viewBox="0 0 13.5 11"><path d="M.5 10.5 L13 .5" stroke="#e01b1b" stroke-width="1.5"/></svg>
<svg style="left:31px;top:539px" width="3" height="3" viewBox="0 0 3 3"><path d="M3 0 V3 H0 Z" fill="#cfcfcf"/></svg>
<svg style="left:16px;top:550px" width="14" height="13" viewBox="0 0 14 13"><rect x="3.5" y="3.5" width="8" height="7" fill="#9c9c9c"/><path d="M3.5 1.5 V0 M6 1.5 V0 M8.5 1.5 V0 M11 1.5 V0 M0 4.5 H2 M0 7 H2 M0 9.5 H2" stroke="#d2d2d2" stroke-width="1"/></svg>
<svg style="left:31px;top:564px" width="3" height="3" viewBox="0 0 3 3"><path d="M3 0 V3 H0 Z" fill="#cfcfcf"/></svg>
<div class="a" style="left:7px;top:567px;width:32px;height:1px;background:#484848;"></div>
<div class="a" style="left:10px;top:570px;width:24.5px;height:19px;background:#383838;border-radius:3px;"></div>
<svg style="left:17px;top:574.5px" width="11" height="10" viewBox="0 0 11 10"><rect x=".6" y=".6" width="9.8" height="8.8" fill="none" stroke="#d2d2d2" stroke-width="1.2"/><rect x="3" y="3" width="4.5" height="4" fill="none" stroke="#d2d2d2" stroke-width="1"/><rect x="6.5" y="5.5" width="2" height="2" fill="#d2d2d2"/></svg>
<svg style="left:31px;top:587px" width="3" height="3" viewBox="0 0 3 3"><path d="M3 0 V3 H0 Z" fill="#cfcfcf"/></svg>
<div class="a" style="left:201px;top:123px;width:192px;height:515.5px;background:#535353;border:1px solid #4f8bcb;"></div>
<div class="a" style="left:202px;top:142px;width:190px;height:19px;background:#4c6a8c;"></div>
<div class="a" style="left:406px;top:142px;width:602px;height:1px;background:#5c5c5c;"></div>
<div class="a" style="left:405.5px;top:156px;width:603px;height:65.5px;border:1px solid #474747;border-radius:3px;box-shadow:inset 0 0 0 0 #000;"></div>
<div class="a" style="left:415px;top:154px;width:71px;height:5px;background:#535353;"></div>
<div class="a" style="left:736.5px;top:166.5px;width:22px;height:22px;background:#323232;border:1px solid #ededed;border-radius:1px;box-shadow:0 0 0 1px #3c3c3c;"></div>
<div class="a" style="left:768.3px;top:166.5px;width:22px;height:22px;background:#535353;border:1px solid #ededed;border-radius:1px;box-shadow:0 0 0 1px #3c3c3c;"></div>
<div class="a" style="left:800px;top:166.5px;width:22px;height:22px;background:#b8b8b8;border:1px solid #ededed;border-radius:1px;box-shadow:0 0 0 1px #3c3c3c;"></div>
<div class="a" style="left:831.6px;top:166.5px;width:22px;height:22px;background:#f0f0f0;border:1px solid #ededed;border-radius:1px;box-shadow:0 0 0 1px #3c3c3c;"></div>
<div class="a" style="left:765.2px;top:163.4px;width:28.2px;height:28.2px;border:2px solid #3d90e4;border-radius:2.5px;"></div>
<div class="a" style="left:415.3px;top:199.8px;width:10px;height:10px;background:#c9c9c9;border-radius:2px;"></div>
<svg style="left:415.3px;top:199.8px" width="10" height="10" viewBox="0 0 10 10"><path d="M2.2 5 L4.2 7.2 L7.9 2.6" fill="none" stroke="#3a3a3a" stroke-width="1.5"/></svg>
<div class="a" style="left:405.5px;top:240.5px;width:603px;height:123.5px;border:1px solid #474747;border-radius:3px;box-shadow:inset 0 0 0 0 #000;"></div>
<div class="a" style="left:415px;top:238.5px;width:230.2px;height:5px;background:#535353;"></div>
<div class="a" style="left:733.8px;top:249px;width:171.2px;height:17.5px;background:#464646;border:1px solid #6b6b6b;border-radius:3px;"></div>
<svg style="left:893.5px;top:255px" width="8" height="6" viewBox="0 0 8 6"><path d="M0.8 1 L4 4.2 L7.2 1" fill="none" stroke="#d6d6d6" stroke-width="1.3"/></svg>
<div class="a" style="left:415.3px;top:275.5px;width:10px;height:10px;background:#c9c9c9;border-radius:2px;"></div>
<svg style="left:415.3px;top:275.5px" width="10" height="10" viewBox="0 0 10 10"><path d="M2.2 5 L4.2 7.2 L7.9 2.6" fill="none" stroke="#3a3a3a" stroke-width="1.5"/></svg>
<div class="a" style="left:415.3px;top:297.6px;width:10px;height:10px;background:#c9c9c9;border-radius:2px;"></div>
<svg style="left:415.3px;top:297.6px" width="10" height="10" viewBox="0 0 10 10"><path d="M2.2 5 L4.2 7.2 L7.9 2.6" fill="none" stroke="#3a3a3a" stroke-width="1.5"/></svg>
<div class="a" style="left:415.3px;top:319.8px;width:10px;height:10px;background:#c9c9c9;border-radius:2px;"></div>
<svg style="left:415.3px;top:319.8px" width="10" height="10" viewBox="0 0 10 10"><path d="M2.2 5 L4.2 7.2 L7.9 2.6" fill="none" stroke="#3a3a3a" stroke-width="1.5"/></svg>
<div class="a" style="left:415.3px;top:342px;width:10px;height:10px;background:#c9c9c9;border-radius:2px;"></div>
<svg style="left:415.3px;top:342px" width="10" height="10" viewBox="0 0 10 10"><path d="M2.2 5 L4.2 7.2 L7.9 2.6" fill="none" stroke="#3a3a3a" stroke-width="1.5"/></svg>
<div class="a" style="left:405.5px;top:382.8px;width:603px;height:146.49999999999994px;border:1px solid #474747;border-radius:3px;box-shadow:inset 0 0 0 0 #000;"></div>
<div class="a" style="left:415px;top:380.8px;width:44px;height:5px;background:#535353;"></div>
<div class="a" style="left:733.8px;top:392.3px;width:171.2px;height:17.5px;background:#464646;border:1px solid #6b6b6b;border-radius:3px;"></div>
<svg style="left:893.5px;top:398.3px" width="8" height="6" viewBox="0 0 8 6"><path d="M0.8 1 L4 4.2 L7.2 1" fill="none" stroke="#d6d6d6" stroke-width="1.3"/></svg>
<div class="a" style="left:415.3px;top:418px;width:10px;height:10px;background:#4d4d4d;border:1px solid #c4c4c4;border-radius:2px;"></div>
<div class="a" style="left:415.3px;top:440.4px;width:10px;height:10px;background:#c9c9c9;border-radius:2px;"></div>
<svg style="left:415.3px;top:440.4px" width="10" height="10" viewBox="0 0 10 10"><path d="M2.2 5 L4.2 7.2 L7.9 2.6" fill="none" stroke="#3a3a3a" stroke-width="1.5"/></svg>
<div class="a" style="left:415.3px;top:462.8px;width:10px;height:10px;background:#c9c9c9;border-radius:2px;"></div>
<svg style="left:415.3px;top:462.8px" width="10" height="10" viewBox="0 0 10 10"><path d="M2.2 5 L4.2 7.2 L7.9 2.6" fill="none" stroke="#3a3a3a" stroke-width="1.5"/></svg>
<div class="a" style="left:415.3px;top:485.1px;width:10px;height:10px;background:#c9c9c9;border-radius:2px;"></div>
<svg style="left:415.3px;top:485.1px" width="10" height="10" viewBox="0 0 10 10"><path d="M2.2 5 L4.2 7.2 L7.9 2.6" fill="none" stroke="#3a3a3a" stroke-width="1.5"/></svg>
<div class="a" style="left:415.3px;top:507.5px;width:10px;height:10px;background:#c9c9c9;border-radius:2px;"></div>
<svg style="left:415.3px;top:507.5px" width="10" height="10" viewBox="0 0 10 10"><path d="M2.2 5 L4.2 7.2 L7.9 2.6" fill="none" stroke="#3a3a3a" stroke-width="1.5"/></svg>
<div class="a" style="left:405.5px;top:548.4px;width:603px;height:93.80000000000007px;border:1px solid #474747;border-radius:3px;box-shadow:inset 0 0 0 0 #000;"></div>
<div class="a" style="left:415px;top:546.4px;width:63.4px;height:5px;background:#535353;"></div>
<div class="a" style="left:609px;top:579.3px;width:167px;height:1px;background:#6c6c6c;"></div>
<div class="a" style="left:609px;top:576px;width:1px;height:7px;background:#6c6c6c;"></div>
<div class="a" style="left:695px;top:576px;width:1px;height:7px;background:#6c6c6c;"></div>
<div class="a" style="left:775.3px;top:574px;width:11px;height:11px;background:#3c3c3c;border:2px solid #f4f4f4;border-radius:6px;"></div>
<div class="a" style="left:733.8px;top:594.5px;width:171.2px;height:17.5px;background:#464646;border:1px solid #6b6b6b;border-radius:3px;"></div>
<svg style="left:893.5px;top:600.5px" width="8" height="6" viewBox="0 0 8 6"><path d="M0.8 1 L4 4.2 L7.2 1" fill="none" stroke="#d6d6d6" stroke-width="1.3"/></svg>
<div class="a" style="left:415.3px;top:620.6px;width:10px;height:10px;background:#4d4d4d;border:1px solid #c4c4c4;border-radius:2px;"></div>
<div class="a" style="left:837px;top:655px;width:77px;height:22px;border:2px solid #e6e6e6;border-radius:11px;"></div>
<div class="a" style="left:922.3px;top:655px;width:77.7px;height:22px;border:1px solid #cfcfcf;border-radius:11px;"></div>
<svg style="left:1263.5px;top:36px" width="7" height="5" viewBox="0 0 7 5"><path d="M0.3 0.3 L2.8 2.5 L0.3 4.7 Z M3.7 0.3 L6.2 2.5 L3.7 4.7 Z" fill="#d8d8d8"/></svg>
<div class="a" style="left:1058px;top:44px;width:63px;height:22.6px;background:#535353;"></div>
<div class="a" style="left:1121px;top:44px;width:1px;height:22px;background:#383838;"></div>
<div class="a" style="left:1180.5px;top:44px;width:1px;height:22px;background:#383838;"></div>
<div class="a" style="left:1241px;top:44px;width:1px;height:22px;background:#383838;"></div>
<div class="a" style="left:1121px;top:65.8px;width:155px;height:0.9px;background:#3a3a3a;"></div>
<div class="a" style="left:1190.6px;top:48px;width:50px;height:16px;overflow:hidden"><div class="t" style="left:0;top:2.7px;font-size:11px;line-height:11px;font-weight:bold;color:#bcbcbc;transform:scaleX(.86);transform-origin:0 50%">CC Libraries</div></div>
<div class="a" style="left:1058px;top:95px;width:218px;height:1px;background:#474747;"></div>
<div class="a" style="left:1067.2px;top:124.5px;width:80.2px;height:18px;background:#484848;border:1px solid #6a6a6a;border-radius:3px;"></div>
<svg style="left:1135px;top:131.0px" width="8" height="6" viewBox="0 0 8 6"><path d="M0.8 1 L4 4.2 L7.2 1" fill="none" stroke="#d6d6d6" stroke-width="1.05"/></svg>
<svg style="left:1179px;top:126.5px" width="13" height="15" viewBox="0 0 13 15"><rect x=".6" y=".6" width="11.8" height="13.8" fill="#636363" stroke="#d4d4d4" stroke-width="1.1"/><circle cx="6.5" cy="5" r="1.9" fill="#d8d8d8"/><path d="M3.3 13.5 V9.6 a1.8 1.8 0 0 1 1.8 -1.8 H7.9 a1.8 1.8 0 0 1 1.8 1.8 V13.5 Z" fill="#d8d8d8"/></svg>
<div class="a" style="left:1198.8px;top:124.5px;width:18px;height:18.5px;background:#333;border-radius:3px;"></div>
<svg style="left:1201.5px;top:127.5px" width="13" height="12" viewBox="0 0 13 12"><rect x=".5" y=".5" width="12" height="11" fill="#e2e2e2" stroke="#f2f2f2"/><circle cx="4" cy="6" r="1.5" fill="#444"/><path d="M6.5 3.5 H10 V8.5 H6.5 Z" fill="#444"/></svg>
<div class="a" style="left:1084.2px;top:153.3px;width:63.800000000000004px;height:17.5px;background:#484848;border:1px solid #6a6a6a;border-radius:3px;"></div>
<div class="a" style="left:1099.7px;top:154.3px;width:1px;height:15.5px;background:#6a6a6a;"></div>
<svg style="left:1088.7px;top:156.5px" width="7" height="11" viewBox="0 0 7 11"><path d="M0.6 3.6 L3.5 0.9 L6.4 3.6 M0.6 7.4 L3.5 10.1 L6.4 7.4" fill="none" stroke="#c8c8c8" stroke-width="1.1"/></svg>
<div class="a" style="left:1084.2px;top:175.0px;width:63.800000000000004px;height:17.5px;background:#484848;border:1px solid #6a6a6a;border-radius:3px;"></div>
<div class="a" style="left:1099.7px;top:176.0px;width:1px;height:15.5px;background:#6a6a6a;"></div>
<svg style="left:1088.7px;top:178.2px" width="7" height="11" viewBox="0 0 7 11"><path d="M0.6 3.6 L3.5 0.9 L6.4 3.6 M0.6 7.4 L3.5 10.1 L6.4 7.4" fill="none" stroke="#c8c8c8" stroke-width="1.1"/></svg>
<svg style="left:1175px;top:154px" width="16" height="15" viewBox="0 0 16 15"><path d="M7.5 2.5 C5 0.8 2.5 1.2 0.8 3 V12.5 C2.5 11 5 10.8 7.5 12.5 Z M8.5 2.5 C11 0.8 13.5 1.2 15.2 3 V12.5 C13.5 11 11 10.8 8.5 12.5 Z" fill="#cfcfcf"/><path d="M8 0 V15" stroke="#cfcfcf" stroke-width="1"/></svg>
<div class="a" style="left:1196.5px;top:153.5px;width:58px;height:17px;background:#484848;border:1px solid #6a6a6a;border-radius:3px;"></div>
<div class="a" style="left:1176.5px;top:179.8px;width:10px;height:10px;background:#4d4d4d;border:1px solid #bdbdbd;border-radius:2px;"></div>
<svg style="left:1067.8px;top:222.5px" width="14" height="14" viewBox="0 0 14 14"><rect x=".5" y=".5" width="13" height="4.2" fill="#cfcfcf"/><rect x=".5" y="6.5" width="13" height="7" fill="none" stroke="#cfcfcf"/></svg>
<div class="a" style="left:1084.2px;top:220.8px;width:63.800000000000004px;height:17.5px;background:#484848;border:1px solid #6a6a6a;border-radius:3px;"></div>
<div class="a" style="left:1099.7px;top:221.8px;width:1px;height:15.5px;background:#6a6a6a;"></div>
<svg style="left:1088.7px;top:224px" width="7" height="11" viewBox="0 0 7 11"><path d="M0.6 3.6 L3.5 0.9 L6.4 3.6 M0.6 7.4 L3.5 10.1 L6.4 7.4" fill="none" stroke="#c8c8c8" stroke-width="1.1"/></svg>
<svg style="left:1067.8px;top:245px" width="14" height="14" viewBox="0 0 14 14"><rect x=".5" y=".5" width="13" height="7" fill="none" stroke="#cfcfcf"/><rect x=".5" y="9.3" width="13" height="4.2" fill="#cfcfcf"/></svg>
<div class="a" style="left:1084.2px;top:243.3px;width:63.800000000000004px;height:17.5px;background:#484848;border:1px solid #6a6a6a;border-radius:3px;"></div>
<div class="a" style="left:1099.7px;top:244.3px;width:1px;height:15.5px;background:#6a6a6a;"></div>
<svg style="left:1088.7px;top:246.5px" width="7" height="11" viewBox="0 0 7 11"><path d="M0.6 3.6 L3.5 0.9 L6.4 3.6 M0.6 7.4 L3.5 10.1 L6.4 7.4" fill="none" stroke="#c8c8c8" stroke-width="1.1"/></svg>
<div class="a" style="left:1152.3px;top:230.5px;width:18.7px;height:18.5px;background:#333;border-radius:3px;"></div>
<svg style="left:1158px;top:233.5px" width="8" height="13" viewBox="0 0 8 13"><g transform="rotate(12 4 6.5)"><rect x="2.2" y="1" width="3.8" height="5.8" rx="1.9" fill="none" stroke="#e0e0e0" stroke-width="1.2"/><rect x="2.2" y="6.2" width="3.8" height="5.8" rx="1.9" fill="none" stroke="#e0e0e0" stroke-width="1.2"/></g></svg>
<svg style="left:1176px;top:222.5px" width="14" height="14" viewBox="0 0 14 14"><rect x=".5" y=".5" width="4.2" height="13" fill="#cfcfcf"/><rect x="6.5" y=".5" width="7" height="13" fill="none" stroke="#cfcfcf"/></svg>
<div class="a" style="left:1193.2px;top:220.8px;width:62.9px;height:17.5px;background:#484848;border:1px solid #6a6a6a;border-radius:3px;"></div>
<div class="a" style="left:1208.7px;top:221.8px;width:1px;height:15.5px;background:#6a6a6a;"></div>
<svg style="left:1197.7px;top:224px" width="7" height="11" viewBox="0 0 7 11"><path d="M0.6 3.6 L3.5 0.9 L6.4 3.6 M0.6 7.4 L3.5 10.1 L6.4 7.4" fill="none" stroke="#c8c8c8" stroke-width="1.1"/></svg>
<svg style="left:1176px;top:245px" width="14" height="14" viewBox="0 0 14 14"><rect x=".5" y=".5" width="7" height="13" fill="none" stroke="#cfcfcf"/><rect x="9.3" y=".5" width="4.2" height="13" fill="#cfcfcf"/></svg>
<div class="a" style="left:1193.2px;top:243.3px;width:62.9px;height:17.5px;background:#484848;border:1px solid #6a6a6a;border-radius:3px;"></div>
<div class="a" style="left:1208.7px;top:244.3px;width:1px;height:15.5px;background:#6a6a6a;"></div>
<svg style="left:1197.7px;top:246.5px" width="7" height="11" viewBox="0 0 7 11"><path d="M0.6 3.6 L3.5 0.9 L6.4 3.6 M0.6 7.4 L3.5 10.1 L6.4 7.4" fill="none" stroke="#c8c8c8" stroke-width="1.1"/></svg>
<div class="a" style="left:1067.2px;top:274.3px;width:188.7px;height:16.5px;border:1px solid #6e6e6e;border-radius:3px;"></div>
<div class="a" style="left:1058px;top:296px;width:218px;height:1px;background:#474747;"></div>
<div class="a" style="left:1067.2px;top:324.5px;width:80.2px;height:18px;background:#484848;border:1px solid #6a6a6a;border-radius:3px;"></div>
<div class="a" style="left:1131px;top:325.5px;width:1px;height:16px;background:#6a6a6a;"></div>
<div class="a" style="left:1132px;top:325.5px;width:14.4px;height:16px;background:#535353;border-radius:0 2px 2px 0;"></div>
<svg style="left:1135.5px;top:331.3px" width="8" height="6" viewBox="0 0 8 6"><path d="M0.8 1 L4 4.2 L7.2 1" fill="none" stroke="#d6d6d6" stroke-width="1.05"/></svg>
<svg style="left:1215px;top:329.5px" width="10" height="10" viewBox="0 0 10 10"><rect x=".6" y=".6" width="8.8" height="8.8" fill="none" stroke="#c8c8c8" stroke-width="1.1"/><path d="M5 2.6 V7.4 M2.6 5 H7.4" stroke="#c8c8c8" stroke-width="1.1"/></svg>
<svg style="left:1239.5px;top:329px" width="9" height="11" viewBox="0 0 9 11"><path d="M0.5 2.2 H8.5 M3 2 V0.7 H6 V2 M1.5 2.5 V10.3 H7.5 V2.5 M3.5 4 V9 M5.5 4 V9" fill="none" stroke="#6e6e6e" stroke-width="1"/></svg>
<div class="a" style="left:1067.2px;top:349.6px;width:188.7px;height:17.5px;border:1px solid #6e6e6e;border-radius:3px;"></div>
<div class="a" style="left:1058px;top:369.8px;width:218px;height:1px;background:#474747;"></div>
<div class="a" style="left:1171px;top:382.3px;width:19px;height:18.6px;background:#333;border-radius:3px;"></div>
<svg style="left:1173.5px;top:384.6px" width="14" height="14" viewBox="0 0 14 14"><path d="M1 13 V1 H13 V5 H5 V13 Z" fill="#dadada"/><path d="M3 1 V3 M5 1 V2.5 M7 1 V3 M9 1 V2.5 M11 1 V3 M1 5 H2.5 M1 7 H3 M1 9 H2.5 M1 11 H3" stroke="#333" stroke-width=".8"/></svg>
<svg style="left:1206px;top:384.3px" width="14" height="14" viewBox="0 0 14 14"><rect x=".5" y=".5" width="13" height="13" fill="none" stroke="#cfcfcf"/><path d="M.5 3.5 H13.5 M.5 7 H13.5 M.5 10.5 H13.5" stroke="#cfcfcf" stroke-width="1"/><path d="M3 .5 V13.5" stroke="#cfcfcf" stroke-width=".8"/></svg>
<svg style="left:1239px;top:384.3px" width="14" height="14" viewBox="0 0 14 14"><rect x=".5" y=".5" width="13" height="13" fill="none" stroke="#cfcfcf"/><path d="M5 .5 V13.5 M9.2 .5 V13.5 M.5 4.8 H13.5 M.5 9.2 H13.5" stroke="#cfcfcf" stroke-width="1"/></svg>
<div class="a" style="left:1058px;top:407px;width:218px;height:1px;background:#474747;"></div>
<div class="a" style="left:1171px;top:416.4px;width:19px;height:18.6px;background:#333;border-radius:3px;"></div>
<div class="a" style="left:1203px;top:416.4px;width:19.5px;height:18.6px;background:#333;border-radius:3px;"></div>
<div class="a" style="left:1235.8px;top:416.4px;width:19.2px;height:18.6px;background:#333;border-radius:3px;"></div>
<svg style="left:1173.5px;top:419px" width="14" height="14" viewBox="0 0 14 14"><path d="M4 0 V14 M7.5 0 V14 M0 4 H14 M0 10 H14" stroke="#dadada" stroke-width="1.1"/></svg>
<svg style="left:1205.5px;top:419px" width="15" height="14" viewBox="0 0 15 14"><path d="M3.5 0 V12 M7 0 V6.5 M0 3.5 H13 M0 8 H8" stroke="#dadada" stroke-width="1.1"/><rect x="8.5" y="9" width="6" height="4.5" fill="#dadada"/><path d="M10 9 V7.5 a1.6 1.6 0 0 1 3.2 0" fill="none" stroke="#dadada" stroke-width="1"/></svg>
<svg style="left:1238px;top:419px" width="15" height="14" viewBox="0 0 15 14"><path d="M3.5 0 V14 M0 4.5 H9" stroke="#dadada" stroke-width="1.1"/><path d="M6.5 1.8 L3.8 4.5 L6.5 7.2" fill="none" stroke="#dadada" stroke-width="1"/><path d="M12.5 5.5 L9 10 H11.5 L10 14 L14.2 8.8 H11.7 Z" fill="#dadada"/></svg>
<div class="a" style="left:1058px;top:441.3px;width:218px;height:1px;background:#474747;"></div>
<div class="a" style="left:1067.2px;top:465.4px;width:188.7px;height:17.2px;border:1px solid #6e6e6e;border-radius:3px;"></div>
<svg style="left:89px;top:781.5px" width="8" height="6" viewBox="0 0 8 6"><path d="M0.8 1 L4 4.2 L7.2 1" fill="none" stroke="#bdbdbd" stroke-width="1.05"/></svg>
<svg style="left:108px;top:780.5px" width="7" height="7" viewBox="0 0 7 7"><path d="M0.6 0 V7" stroke="#9a9a9a" stroke-width="1.2"/><path d="M6.5 0.3 V6.7 L2 3.5 Z" fill="#9a9a9a"/></svg>
<svg style="left:126.5px;top:780.5px" width="5" height="7" viewBox="0 0 5 7"><path d="M4.8 0.3 V6.7 L0.3 3.5 Z" fill="#8a8a8a"/></svg>
<div class="a" style="left:141px;top:777px;width:77.5px;height:13px;background:#5f5f5f;"></div>
<svg style="left:207px;top:781.5px" width="8" height="6" viewBox="0 0 8 6"><path d="M0.8 1 L4 4.2 L7.2 1" fill="none" stroke="#cfcfcf" stroke-width="1.05"/></svg>
<svg style="left:229.5px;top:780.5px" width="5" height="7" viewBox="0 0 5 7"><path d="M0.2 0.3 V6.7 L4.7 3.5 Z" fill="#8a8a8a"/></svg>
<svg style="left:246px;top:780.5px" width="7" height="7" viewBox="0 0 7 7"><path d="M6.4 0 V7" stroke="#9a9a9a" stroke-width="1.2"/><path d="M0.5 0.3 V6.7 L5 3.5 Z" fill="#9a9a9a"/></svg>
<svg style="left:268px;top:779px" width="14" height="10" viewBox="0 0 14 10"><path d="M1.5 9 V4.5 a4 4 0 0 1 8 0 V9" fill="none" stroke="#8c8c8c" stroke-width="1.6"/><path d="M5.5 1 V5 H9" fill="none" stroke="#8c8c8c" stroke-width="1.2"/><rect x="12" y="8" width="1.5" height="1.5" fill="#8c8c8c"/></svg>
<svg style="left:382px;top:781.5px" width="8" height="6" viewBox="0 0 8 6"><path d="M0.8 1 L4 4.2 L7.2 1" fill="none" stroke="#bdbdbd" stroke-width="1.05"/></svg>
<div class="a" style="left:403.5px;top:780px;width:8px;height:8px;background:#3d8a3d;border-radius:4px;"></div>
<svg style="left:479px;top:781.5px" width="8" height="6" viewBox="0 0 8 6"><path d="M0.8 1 L4 4.2 L7.2 1" fill="none" stroke="#7c7c7c" stroke-width="1.05"/></svg>
<svg style="left:1028px;top:779px" width="13" height="10" viewBox="0 0 13 10"><rect x=".6" y=".6" width="11.8" height="8.8" fill="none" stroke="#c6c6c6" stroke-width="1.1"/><path d="M6.5 .6 V9.4" stroke="#c6c6c6" stroke-width="1.1"/></svg>
<svg style="left:1045px;top:780px" width="9" height="9" viewBox="0 0 9 9"><path d="M8 1 L1 8 M8 4 L4 8 M8 7 L7 8" stroke="#6a6a6a" stroke-width=".9" stroke-dasharray="1 1"/></svg>
<div class="t" style="left:17.30px;top:12.20px;font-size:8px;line-height:8px;color:#ff4d7d;font-weight:bold;transform:scaleX(0.9846);transform-origin:0 50%;">Id</div>
<div class="t" style="left:76.00px;top:10.50px;font-size:12px;line-height:12px;color:#e8e8e8;transform:scaleX(0.8470);transform-origin:0 50%;">Файл</div>
<div class="t" style="left:115.00px;top:10.50px;font-size:12px;line-height:12px;color:#e8e8e8;transform:scaleX(0.8532);transform-origin:0 50%;">Редактирование</div>
<div class="t" style="left:209.00px;top:10.50px;font-size:12px;line-height:12px;color:#e8e8e8;transform:scaleX(0.8537);transform-origin:0 50%;">Макет</div>
<div class="t" style="left:253.00px;top:10.50px;font-size:12px;line-height:12px;color:#e8e8e8;transform:scaleX(0.8273);transform-origin:0 50%;">Текст</div>
<div class="t" style="left:293.00px;top:10.50px;font-size:12px;line-height:12px;color:#e8e8e8;transform:scaleX(0.8563);transform-origin:0 50%;">Объект</div>
<div class="t" style="left:342.00px;top:10.50px;font-size:12px;line-height:12px;color:#e8e8e8;transform:scaleX(0.8499);transform-origin:0 50%;">Таблица</div>
<div class="t" style="left:397.00px;top:10.50px;font-size:12px;line-height:12px;color:#e8e8e8;transform:scaleX(0.8940);transform-origin:0 50%;">Просмотр</div>
<div class="t" style="left:461.00px;top:10.50px;font-size:12px;line-height:12px;color:#e8e8e8;transform:scaleX(0.8964);transform-origin:0 50%;">Окно</div>
<div class="t" style="left:500.00px;top:10.50px;font-size:12px;line-height:12px;color:#e8e8e8;transform:scaleX(0.8284);transform-origin:0 50%;">Справка</div>
<div class="t" style="left:908.00px;top:10.50px;font-size:12px;line-height:12px;color:#e8e8e8;transform:scaleX(0.8205);transform-origin:0 50%;">Существенные элементы</div>
<div class="t" style="left:53.00px;top:41.40px;font-size:10px;line-height:10px;color:#f0f0f0;font-weight:bold;transform:scaleX(0.9368);transform-origin:0 50%;">Безымянный-1 @ 44%</div>
<div class="t" style="left:65.10px;top:59.15px;font-size:8.5px;line-height:8.5px;color:#868686;transform:scaleX(0.9716);transform-origin:0 50%;">0</div>
<div class="t" style="left:115.76px;top:59.15px;font-size:8.5px;line-height:8.5px;color:#868686;transform:scaleX(0.8881);transform-origin:0 50%;">100</div>
<div class="t" style="left:166.42px;top:59.15px;font-size:8.5px;line-height:8.5px;color:#868686;transform:scaleX(0.8881);transform-origin:0 50%;">200</div>
<div class="t" style="left:217.08px;top:59.15px;font-size:8.5px;line-height:8.5px;color:#868686;transform:scaleX(0.8881);transform-origin:0 50%;">300</div>
<div class="t" style="left:267.74px;top:59.15px;font-size:8.5px;line-height:8.5px;color:#868686;transform:scaleX(0.8881);transform-origin:0 50%;">400</div>
<div class="t" style="left:318.40px;top:59.15px;font-size:8.5px;line-height:8.5px;color:#868686;transform:scaleX(0.8881);transform-origin:0 50%;">500</div>
<div class="t" style="left:369.06px;top:59.15px;font-size:8.5px;line-height:8.5px;color:#868686;transform:scaleX(0.8881);transform-origin:0 50%;">600</div>
<div class="t" style="left:419.72px;top:59.15px;font-size:8.5px;line-height:8.5px;color:#868686;transform:scaleX(0.8881);transform-origin:0 50%;">700</div>
<div class="t" style="left:470.38px;top:59.15px;font-size:8.5px;line-height:8.5px;color:#868686;transform:scaleX(0.8881);transform-origin:0 50%;">800</div>
<div class="t" style="left:521.04px;top:59.15px;font-size:8.5px;line-height:8.5px;color:#868686;transform:scaleX(0.8881);transform-origin:0 50%;">900</div>
<div class="t" style="left:571.70px;top:59.15px;font-size:8.5px;line-height:8.5px;color:#868686;transform:scaleX(0.8984);transform-origin:0 50%;">1000</div>
<div class="t" style="left:622.36px;top:59.15px;font-size:8.5px;line-height:8.5px;color:#868686;transform:scaleX(0.9299);transform-origin:0 50%;">1100</div>
<div class="t" style="left:673.02px;top:59.15px;font-size:8.5px;line-height:8.5px;color:#868686;transform:scaleX(0.8984);transform-origin:0 50%;">1200</div>
<div class="t" style="left:723.68px;top:59.15px;font-size:8.5px;line-height:8.5px;color:#868686;transform:scaleX(0.8984);transform-origin:0 50%;">1300</div>
<div class="t" style="left:774.34px;top:59.15px;font-size:8.5px;line-height:8.5px;color:#868686;transform:scaleX(0.8984);transform-origin:0 50%;">1400</div>
<div class="t" style="left:825.00px;top:59.15px;font-size:8.5px;line-height:8.5px;color:#868686;transform:scaleX(0.8984);transform-origin:0 50%;">1500</div>
<div class="t" style="left:875.66px;top:59.15px;font-size:8.5px;line-height:8.5px;color:#868686;transform:scaleX(0.8984);transform-origin:0 50%;">1600</div>
<div class="t" style="left:926.32px;top:59.15px;font-size:8.5px;line-height:8.5px;color:#868686;transform:scaleX(0.8984);transform-origin:0 50%;">1700</div>
<div class="t" style="left:976.98px;top:59.15px;font-size:8.5px;line-height:8.5px;color:#868686;transform:scaleX(0.8984);transform-origin:0 50%;">1800</div>
<div class="t" style="left:45.00px;top:152.30px;font-size:8px;line-height:8px;color:#868686;transform:scaleX(0.9656);transform-origin:0 50%;">0</div>
<div class="t" style="left:45.00px;top:202.90px;font-size:8px;line-height:8px;color:#868686;transform:scaleX(0.9656);transform-origin:0 50%;">1</div>
<div class="t" style="left:45.00px;top:210.50px;font-size:8px;line-height:8px;color:#868686;transform:scaleX(0.9656);transform-origin:0 50%;">0</div>
<div class="t" style="left:45.00px;top:218.10px;font-size:8px;line-height:8px;color:#868686;transform:scaleX(0.9656);transform-origin:0 50%;">0</div>
<div class="t" style="left:45.00px;top:253.50px;font-size:8px;line-height:8px;color:#868686;transform:scaleX(0.9656);transform-origin:0 50%;">2</div>
<div class="t" style="left:45.00px;top:261.10px;font-size:8px;line-height:8px;color:#868686;transform:scaleX(0.9656);transform-origin:0 50%;">0</div>
<div class="t" style="left:45.00px;top:268.70px;font-size:8px;line-height:8px;color:#868686;transform:scaleX(0.9656);transform-origin:0 50%;">0</div>
<div class="t" style="left:45.00px;top:304.10px;font-size:8px;line-height:8px;color:#868686;transform:scaleX(0.9656);transform-origin:0 50%;">3</div>
<div class="t" style="left:45.00px;top:311.70px;font-size:8px;line-height:8px;color:#868686;transform:scaleX(0.9656);transform-origin:0 50%;">0</div>
<div class="t" style="left:45.00px;top:319.30px;font-size:8px;line-height:8px;color:#868686;transform:scaleX(0.9656);transform-origin:0 50%;">0</div>
<div class="t" style="left:45.00px;top:354.70px;font-size:8px;line-height:8px;color:#868686;transform:scaleX(0.9656);transform-origin:0 50%;">4</div>
<div class="t" style="left:45.00px;top:362.30px;font-size:8px;line-height:8px;color:#868686;transform:scaleX(0.9656);transform-origin:0 50%;">0</div>
<div class="t" style="left:45.00px;top:369.90px;font-size:8px;line-height:8px;color:#868686;transform:scaleX(0.9656);transform-origin:0 50%;">0</div>
<div class="t" style="left:45.00px;top:405.30px;font-size:8px;line-height:8px;color:#868686;transform:scaleX(0.9656);transform-origin:0 50%;">5</div>
<div class="t" style="left:45.00px;top:412.90px;font-size:8px;line-height:8px;color:#868686;transform:scaleX(0.9656);transform-origin:0 50%;">0</div>
<div class="t" style="left:45.00px;top:420.50px;font-size:8px;line-height:8px;color:#868686;transform:scaleX(0.9656);transform-origin:0 50%;">0</div>
<div class="t" style="left:45.00px;top:455.90px;font-size:8px;line-height:8px;color:#868686;transform:scaleX(0.9656);transform-origin:0 50%;">6</div>
<div class="t" style="left:45.00px;top:463.50px;font-size:8px;line-height:8px;color:#868686;transform:scaleX(0.9656);transform-origin:0 50%;">0</div>
<div class="t" style="left:45.00px;top:471.10px;font-size:8px;line-height:8px;color:#868686;transform:scaleX(0.9656);transform-origin:0 50%;">0</div>
<div class="t" style="left:45.00px;top:506.50px;font-size:8px;line-height:8px;color:#868686;transform:scaleX(0.9656);transform-origin:0 50%;">7</div>
<div class="t" style="left:45.00px;top:514.10px;font-size:8px;line-height:8px;color:#868686;transform:scaleX(0.9656);transform-origin:0 50%;">0</div>
<div class="t" style="left:45.00px;top:521.70px;font-size:8px;line-height:8px;color:#868686;transform:scaleX(0.9656);transform-origin:0 50%;">0</div>
<div class="t" style="left:45.00px;top:557.10px;font-size:8px;line-height:8px;color:#868686;transform:scaleX(0.9656);transform-origin:0 50%;">8</div>
<div class="t" style="left:45.00px;top:564.70px;font-size:8px;line-height:8px;color:#868686;transform:scaleX(0.9656);transform-origin:0 50%;">0</div>
<div class="t" style="left:45.00px;top:572.30px;font-size:8px;line-height:8px;color:#868686;transform:scaleX(0.9656);transform-origin:0 50%;">0</div>
<div class="t" style="left:45.00px;top:607.70px;font-size:8px;line-height:8px;color:#868686;transform:scaleX(0.9656);transform-origin:0 50%;">9</div>
<div class="t" style="left:45.00px;top:615.30px;font-size:8px;line-height:8px;color:#868686;transform:scaleX(0.9656);transform-origin:0 50%;">0</div>
<div class="t" style="left:45.00px;top:622.90px;font-size:8px;line-height:8px;color:#868686;transform:scaleX(0.9656);transform-origin:0 50%;">0</div>
<div class="t" style="left:45.00px;top:658.30px;font-size:8px;line-height:8px;color:#868686;transform:scaleX(0.9656);transform-origin:0 50%;">1</div>
<div class="t" style="left:45.00px;top:665.90px;font-size:8px;line-height:8px;color:#868686;transform:scaleX(0.9656);transform-origin:0 50%;">0</div>
<div class="t" style="left:45.00px;top:673.50px;font-size:8px;line-height:8px;color:#868686;transform:scaleX(0.9656);transform-origin:0 50%;">0</div>
<div class="t" style="left:45.00px;top:681.10px;font-size:8px;line-height:8px;color:#868686;transform:scaleX(0.9656);transform-origin:0 50%;">0</div>
<div class="t" style="left:45.00px;top:708.90px;font-size:8px;line-height:8px;color:#868686;transform:scaleX(0.9656);transform-origin:0 50%;">1</div>
<div class="t" style="left:45.00px;top:716.50px;font-size:8px;line-height:8px;color:#868686;transform:scaleX(0.9656);transform-origin:0 50%;">1</div>
<div class="t" style="left:45.00px;top:724.10px;font-size:8px;line-height:8px;color:#868686;transform:scaleX(0.9656);transform-origin:0 50%;">0</div>
<div class="t" style="left:45.00px;top:107.50px;font-size:8px;line-height:8px;color:#868686;transform:scaleX(0.9656);transform-origin:0 50%;">0</div>
<div class="t" style="left:45.00px;top:116.50px;font-size:8px;line-height:8px;color:#868686;transform:scaleX(0.9656);transform-origin:0 50%;">0</div>
<div class="t" style="left:16.66px;top:162.00px;font-size:19px;line-height:19px;color:#d2d2d2;font-weight:bold;transform:scaleX(1.1034);transform-origin:50% 50%;font-family:'Liberation Serif',serif;">T</div>
<div class="t" style="left:25.99px;top:505.50px;font-size:12px;line-height:12px;color:#e0e0e0;font-weight:bold;font-family:'Liberation Serif',serif;">T</div>
<div class="t" style="left:195.50px;top:92.00px;font-size:11px;line-height:11px;color:#9a9a9a;transform:scaleX(0.9270);transform-origin:0 50%;">Установки</div>
<div class="t" style="left:205.20px;top:128.10px;font-size:9px;line-height:9px;color:#f2f2f2;transform:scaleX(0.9414);transform-origin:0 50%;text-shadow:0 0 .5px #f2f2f2;">Основные</div>
<div class="t" style="left:205.20px;top:147.00px;font-size:9px;line-height:9px;color:#f2f2f2;transform:scaleX(0.9742);transform-origin:0 50%;text-shadow:0 0 .5px #f2f2f2;">Интерфейс</div>
<div class="t" style="left:205.20px;top:165.90px;font-size:9px;line-height:9px;color:#f2f2f2;transform:scaleX(0.9566);transform-origin:0 50%;text-shadow:0 0 .5px #f2f2f2;">Масштабирование интерфейса</div>
<div class="t" style="left:205.20px;top:184.80px;font-size:9px;line-height:9px;color:#f2f2f2;text-shadow:0 0 .5px #f2f2f2;">Текст</div>
<div class="t" style="left:205.20px;top:203.70px;font-size:9px;line-height:9px;color:#f2f2f2;transform:scaleX(0.9670);transform-origin:0 50%;text-shadow:0 0 .5px #f2f2f2;">Дополнительные параметры текста</div>
<div class="t" style="left:205.20px;top:222.60px;font-size:9px;line-height:9px;color:#f2f2f2;transform:scaleX(0.9419);transform-origin:0 50%;text-shadow:0 0 .5px #f2f2f2;">Компоновка</div>
<div class="t" style="left:205.20px;top:241.50px;font-size:9px;line-height:9px;color:#f2f2f2;transform:scaleX(0.9692);transform-origin:0 50%;text-shadow:0 0 .5px #f2f2f2;">Единицы измерения</div>
<div class="t" style="left:205.20px;top:260.40px;font-size:9px;line-height:9px;color:#f2f2f2;transform:scaleX(0.9590);transform-origin:0 50%;text-shadow:0 0 .5px #f2f2f2;">Сетки</div>
<div class="t" style="left:205.20px;top:279.30px;font-size:9px;line-height:9px;color:#f2f2f2;transform:scaleX(0.9600);transform-origin:0 50%;text-shadow:0 0 .5px #f2f2f2;">Направляющие и монтажный стол</div>
<div class="t" style="left:205.20px;top:298.20px;font-size:9px;line-height:9px;color:#f2f2f2;transform:scaleX(0.9159);transform-origin:0 50%;text-shadow:0 0 .5px #f2f2f2;">Словарь</div>
<div class="t" style="left:205.20px;top:317.10px;font-size:9px;line-height:9px;color:#f2f2f2;transform:scaleX(0.9452);transform-origin:0 50%;text-shadow:0 0 .5px #f2f2f2;">Орфография</div>
<div class="t" style="left:205.20px;top:336.00px;font-size:9px;line-height:9px;color:#f2f2f2;transform:scaleX(0.9653);transform-origin:0 50%;text-shadow:0 0 .5px #f2f2f2;">Автокоррекция</div>
<div class="t" style="left:205.20px;top:354.90px;font-size:9px;line-height:9px;color:#f2f2f2;transform:scaleX(0.9486);transform-origin:0 50%;text-shadow:0 0 .5px #f2f2f2;">Примечания</div>
<div class="t" style="left:205.20px;top:373.80px;font-size:9px;line-height:9px;color:#f2f2f2;transform:scaleX(0.9541);transform-origin:0 50%;text-shadow:0 0 .5px #f2f2f2;">Отслеживать изменения</div>
<div class="t" style="left:205.20px;top:392.70px;font-size:9px;line-height:9px;color:#f2f2f2;transform:scaleX(0.9426);transform-origin:0 50%;text-shadow:0 0 .5px #f2f2f2;">Редактор материалов</div>
<div class="t" style="left:205.20px;top:411.60px;font-size:9px;line-height:9px;color:#f2f2f2;transform:scaleX(0.9512);transform-origin:0 50%;text-shadow:0 0 .5px #f2f2f2;">Режим отображения</div>
<div class="t" style="left:205.20px;top:430.50px;font-size:9px;line-height:9px;color:#f2f2f2;transform:scaleX(0.9510);transform-origin:0 50%;text-shadow:0 0 .5px #f2f2f2;">Воспроизведение черного цвета</div>
<div class="t" style="left:205.20px;top:449.40px;font-size:9px;line-height:9px;color:#f2f2f2;transform:scaleX(0.9445);transform-origin:0 50%;text-shadow:0 0 .5px #f2f2f2;">Обработка файлов</div>
<div class="t" style="left:205.20px;top:468.30px;font-size:9px;line-height:9px;color:#f2f2f2;transform:scaleX(0.9539);transform-origin:0 50%;text-shadow:0 0 .5px #f2f2f2;">Обработка буфера</div>
<div class="t" style="left:406.50px;top:127.50px;font-size:11px;line-height:11px;color:#ebebeb;transform:scaleX(0.9490);transform-origin:0 50%;">Интерфейс</div>
<div class="t" style="left:418.40px;top:151.10px;font-size:11px;line-height:11px;color:#ebebeb;transform:scaleX(0.9373);transform-origin:0 50%;">Оформление</div>
<div class="t" style="left:652.00px;top:171.80px;font-size:11px;line-height:11px;color:#ebebeb;transform:scaleX(0.9638);transform-origin:0 50%;">Цветовая тема:</div>
<div class="t" style="left:431.60px;top:199.30px;font-size:11px;line-height:11px;color:#ebebeb;transform:scaleX(0.9693);transform-origin:0 50%;">Согласовать монтажный стол с цветовой темой</div>
<div class="t" style="left:418.40px;top:235.60px;font-size:11px;line-height:11px;color:#ebebeb;transform:scaleX(0.9767);transform-origin:0 50%;">Параметры курсора и сенсорной технологии</div>
<div class="t" style="left:673.50px;top:252.80px;font-size:11px;line-height:11px;color:#ebebeb;transform:scaleX(0.9854);transform-origin:0 50%;">Подсказки:</div>
<div class="t" style="left:738.30px;top:252.50px;font-size:11px;line-height:11px;color:#ebebeb;transform:scaleX(0.8950);transform-origin:0 50%;">Быстрые</div>
<div class="t" style="left:431.60px;top:275.00px;font-size:11px;line-height:11px;color:#ebebeb;transform:scaleX(0.9706);transform-origin:0 50%;">Показывать миниатюры при помещении</div>
<div class="t" style="left:431.60px;top:297.10px;font-size:11px;line-height:11px;color:#ebebeb;transform:scaleX(0.9734);transform-origin:0 50%;">Показать значения трансформирования</div>
<div class="t" style="left:431.60px;top:319.30px;font-size:11px;line-height:11px;color:#ebebeb;transform:scaleX(0.9812);transform-origin:0 50%;">Поддержка сенсорной технологии Multi-Touch</div>
<div class="t" style="left:431.60px;top:341.50px;font-size:11px;line-height:11px;color:#ebebeb;transform:scaleX(0.9750);transform-origin:0 50%;">Выделять объект, на который наведен инструмент &quot;Выделение&quot;</div>
<div class="t" style="left:418.40px;top:377.90px;font-size:11px;line-height:11px;color:#ebebeb;transform:scaleX(0.9630);transform-origin:0 50%;">Панели</div>
<div class="t" style="left:549.80px;top:395.80px;font-size:11px;line-height:11px;color:#ebebeb;transform:scaleX(0.9689);transform-origin:0 50%;">Плавающая палитра инструментов:</div>
<div class="t" style="left:738.30px;top:395.80px;font-size:11px;line-height:11px;color:#ebebeb;transform:scaleX(0.9838);transform-origin:0 50%;">В один столбец</div>
<div class="t" style="left:431.60px;top:417.50px;font-size:11px;line-height:11px;color:#ebebeb;transform:scaleX(0.9763);transform-origin:0 50%;">Автоматически сворачивать палитры пиктограмм</div>
<div class="t" style="left:431.60px;top:439.90px;font-size:11px;line-height:11px;color:#ebebeb;transform:scaleX(0.9715);transform-origin:0 50%;">Автоматически показывать скрытые палитры</div>
<div class="t" style="left:431.60px;top:462.30px;font-size:11px;line-height:11px;color:#ebebeb;transform:scaleX(0.9721);transform-origin:0 50%;">Открыть документы как вкладки</div>
<div class="t" style="left:431.60px;top:484.60px;font-size:11px;line-height:11px;color:#ebebeb;transform:scaleX(0.9773);transform-origin:0 50%;">Разрешить прикрепление плавающего окна документа</div>
<div class="t" style="left:431.60px;top:507.00px;font-size:11px;line-height:11px;color:#ebebeb;transform:scaleX(0.9457);transform-origin:0 50%;">Большие вкладки</div>
<div class="t" style="left:418.40px;top:543.50px;font-size:11px;line-height:11px;color:#ebebeb;transform:scaleX(0.9618);transform-origin:0 50%;">Параметры</div>
<div class="t" style="left:483.60px;top:559.30px;font-size:9px;line-height:9px;color:#ebebeb;transform:scaleX(0.9622);transform-origin:0 50%;">Лучшая производительность</div>
<div class="t" style="left:665.60px;top:559.30px;font-size:9px;line-height:9px;color:#ebebeb;transform:scaleX(0.9210);transform-origin:0 50%;">Более высокое качество</div>
<div class="t" style="left:497.50px;top:573.90px;font-size:11px;line-height:11px;color:#ebebeb;transform:scaleX(0.9754);transform-origin:0 50%;">Инструмент &quot;Рука&quot;:</div>
<div class="t" style="left:794.50px;top:574.75px;font-size:9.5px;line-height:9.5px;color:#ebebeb;transform:scaleX(0.9045);transform-origin:0 50%;">Показывать полностью</div>
<div class="t" style="left:525.70px;top:598.70px;font-size:11px;line-height:11px;color:#ebebeb;transform:scaleX(0.9865);transform-origin:0 50%;">Интерактивное отображение на экране:</div>
<div class="t" style="left:738.30px;top:598.00px;font-size:11px;line-height:11px;color:#ebebeb;transform:scaleX(0.9713);transform-origin:0 50%;">С задержкой</div>
<div class="t" style="left:431.60px;top:620.10px;font-size:11px;line-height:11px;color:#ebebeb;transform:scaleX(0.9828);transform-origin:0 50%;">Не отображать векторную графику при перетаскивании</div>
<div class="t" style="left:867.35px;top:661.20px;font-size:11px;line-height:11px;color:#ebebeb;transform:scaleX(0.9430);transform-origin:50% 50%;">OK</div>
<div class="t" style="left:941.50px;top:661.20px;font-size:11px;line-height:11px;color:#ebebeb;transform:scaleX(0.9501);transform-origin:0 50%;">Отмена</div>
<div class="t" style="left:1068.80px;top:50.70px;font-size:11px;line-height:11px;color:#f4f4f4;font-weight:bold;transform:scaleX(0.7955);transform-origin:0 50%;">Свойства</div>
<div class="t" style="left:1131.00px;top:50.70px;font-size:11px;line-height:11px;color:#bcbcbc;font-weight:bold;transform:scaleX(0.8343);transform-origin:0 50%;">Страницы</div>
<div class="t" style="left:1066.80px;top:77.25px;font-size:9.5px;line-height:9.5px;color:#e4e4e4;transform:scaleX(0.9029);transform-origin:0 50%;text-shadow:0 0 .4px #e4e4e4;">Объект не выбран</div>
<div class="t" style="left:1066.80px;top:106.25px;font-size:9.5px;line-height:9.5px;color:#e4e4e4;transform:scaleX(0.8872);transform-origin:0 50%;text-shadow:0 0 .4px #e4e4e4;">Документ</div>
<div class="t" style="left:1071.00px;top:128.85px;font-size:9.5px;line-height:9.5px;color:#e4e4e4;transform:scaleX(0.9121);transform-origin:0 50%;">[Заказной]</div>
<div class="t" style="left:1070.50px;top:157.05px;font-size:9.5px;line-height:9.5px;color:#e4e4e4;transform:scaleX(0.9243);transform-origin:0 50%;">Ш:</div>
<div class="t" style="left:1104.50px;top:157.45px;font-size:9.5px;line-height:9.5px;color:#e4e4e4;transform:scaleX(0.8934);transform-origin:0 50%;">1920 пикс.</div>
<div class="t" style="left:1071.50px;top:178.65px;font-size:9.5px;line-height:9.5px;color:#e4e4e4;transform:scaleX(0.9461);transform-origin:0 50%;">В:</div>
<div class="t" style="left:1104.50px;top:179.15px;font-size:9.5px;line-height:9.5px;color:#e4e4e4;transform:scaleX(0.8934);transform-origin:0 50%;">1080 пикс.</div>
<div class="t" style="left:1201.00px;top:157.45px;font-size:9.5px;line-height:9.5px;color:#e4e4e4;transform:scaleX(0.8496);transform-origin:0 50%;">1</div>
<div class="t" style="left:1191.60px;top:180.05px;font-size:9.5px;line-height:9.5px;color:#e4e4e4;transform:scaleX(0.8815);transform-origin:0 50%;">Разворот</div>
<div class="t" style="left:1066.80px;top:202.55px;font-size:9.5px;line-height:9.5px;color:#e4e4e4;transform:scaleX(0.8719);transform-origin:0 50%;text-shadow:0 0 .4px #e4e4e4;">Поля</div>
<div class="t" style="left:1104.50px;top:224.95px;font-size:9.5px;line-height:9.5px;color:#e4e4e4;transform:scaleX(0.9260);transform-origin:0 50%;">36 пикс.</div>
<div class="t" style="left:1104.50px;top:247.45px;font-size:9.5px;line-height:9.5px;color:#e4e4e4;transform:scaleX(0.9260);transform-origin:0 50%;">36 пикс.</div>
<div class="t" style="left:1212.60px;top:224.95px;font-size:9.5px;line-height:9.5px;color:#e4e4e4;transform:scaleX(0.9345);transform-origin:0 50%;">36 пикс.</div>
<div class="t" style="left:1212.60px;top:247.45px;font-size:9.5px;line-height:9.5px;color:#e4e4e4;transform:scaleX(0.9345);transform-origin:0 50%;">36 пикс.</div>
<div class="t" style="left:1125.00px;top:278.10px;font-size:9.5px;line-height:9.5px;color:#e4e4e4;transform:scaleX(0.9002);transform-origin:0 50%;text-shadow:0 0 .4px #e4e4e4;">Настройка макета</div>
<div class="t" style="left:1066.80px;top:306.95px;font-size:9.5px;line-height:9.5px;color:#e4e4e4;transform:scaleX(0.8987);transform-origin:0 50%;text-shadow:0 0 .4px #e4e4e4;">Страница</div>
<div class="t" style="left:1071.00px;top:329.05px;font-size:9.5px;line-height:9.5px;color:#e4e4e4;transform:scaleX(0.8496);transform-origin:0 50%;">1</div>
<div class="t" style="left:1122.00px;top:353.90px;font-size:9.5px;line-height:9.5px;color:#e4e4e4;transform:scaleX(0.9145);transform-origin:0 50%;text-shadow:0 0 .4px #e4e4e4;">Редактировать стр.</div>
<div class="t" style="left:1066.80px;top:387.45px;font-size:9.5px;line-height:9.5px;color:#e4e4e4;transform:scaleX(0.9511);transform-origin:0 50%;text-shadow:0 0 .4px #e4e4e4;">Линейки и сетки</div>
<div class="t" style="left:1066.80px;top:421.45px;font-size:9.5px;line-height:9.5px;color:#e4e4e4;transform:scaleX(0.9027);transform-origin:0 50%;text-shadow:0 0 .4px #e4e4e4;">Направляющие</div>
<div class="t" style="left:1066.80px;top:448.05px;font-size:9.5px;line-height:9.5px;color:#e4e4e4;transform:scaleX(0.9007);transform-origin:0 50%;text-shadow:0 0 .4px #e4e4e4;">Быстрые действия</div>
<div class="t" style="left:1131.00px;top:469.55px;font-size:9.5px;line-height:9.5px;color:#e4e4e4;transform:scaleX(0.9064);transform-origin:0 50%;text-shadow:0 0 .4px #e4e4e4;">Импорт файла</div>
<div class="t" style="left:53.50px;top:779.25px;font-size:9.5px;line-height:9.5px;color:#cdcdcd;transform:scaleX(0.8531);transform-origin:0 50%;">44,25%</div>
<div class="t" style="left:145.00px;top:779.25px;font-size:9.5px;line-height:9.5px;color:#e2e2e2;transform:scaleX(0.8496);transform-origin:0 50%;">1</div>
<div class="t" style="left:295.00px;top:779.25px;font-size:9.5px;line-height:9.5px;color:#cdcdcd;transform:scaleX(0.9421);transform-origin:0 50%;">[Основной] (рабо...</div>
<div class="t" style="left:417.50px;top:779.25px;font-size:9.5px;line-height:9.5px;color:#8e8e8e;transform:scaleX(0.9064);transform-origin:0 50%;">Ошибок нет</div>
</div>
</body></html>
